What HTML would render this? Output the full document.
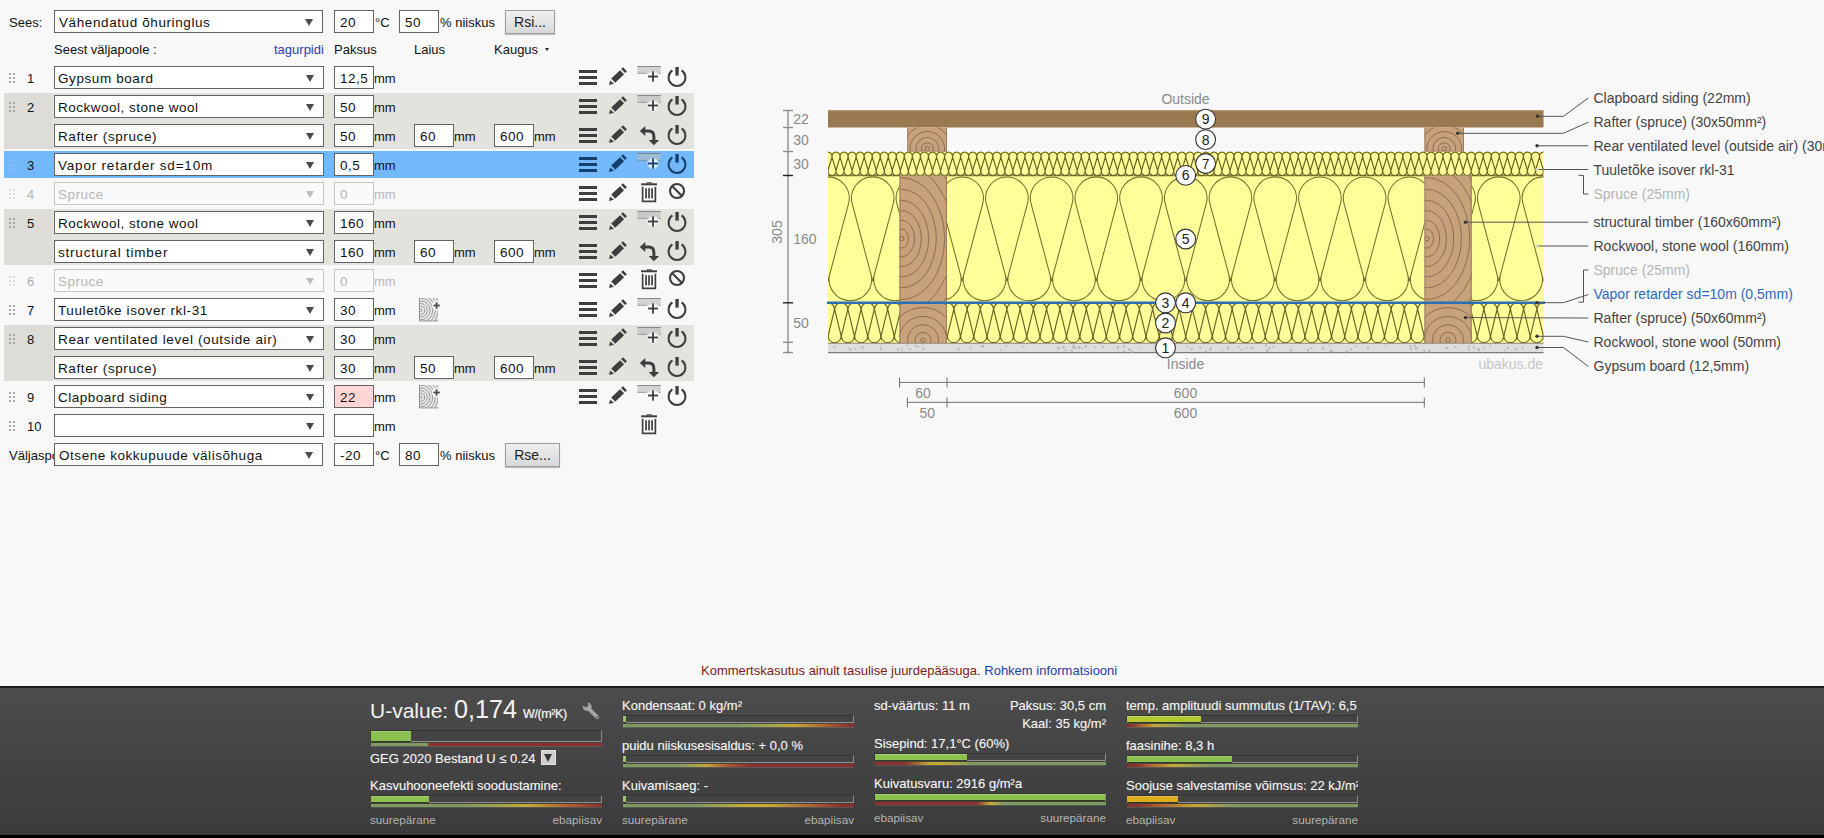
<!DOCTYPE html><html><head><meta charset="utf-8"><title>U-value</title><style>
*{box-sizing:border-box;margin:0;padding:0}
html,body{width:1824px;height:838px;overflow:hidden}
body{background:#f8f8f8;font-family:"Liberation Sans",sans-serif;font-size:13px;color:#111;position:relative}
.a{position:absolute;white-space:nowrap}
.t{position:absolute;white-space:nowrap;line-height:16px;height:16px;font-size:13px;color:#111}
.sel{position:absolute;height:23px;border:1px solid #636363;background:#fff;font-size:13.5px;letter-spacing:.5px;line-height:23px;padding-left:3px;color:#111;white-space:nowrap;overflow:hidden}
.sel:after{content:"";position:absolute;right:9px;top:8px;border-left:4px solid transparent;border-right:4px solid transparent;border-top:7px solid #4a4a4a}
.inp{position:absolute;height:23px;width:40px;border:1px solid #636363;background:#fff;font-size:13.5px;letter-spacing:.5px;line-height:23px;padding-left:5px;color:#111;white-space:nowrap;overflow:hidden}
.dis{border-color:#c6c6c6;background:#fafafa;color:#b6b6b6}
.dis:after{border-top-color:#bdbdbd}
.band{position:absolute;left:4px;width:690px}
.num{position:absolute;font-size:14px;line-height:16px;color:#111}
.btn{position:absolute;height:24px;border:1px solid #9c9c9c;background:linear-gradient(#efefef,#d8d8d8);box-shadow:0 1px 1px rgba(0,0,0,.22);font-size:14px;line-height:22px;text-align:center;color:#222}
svg{position:absolute;overflow:visible}
#bot{position:absolute;left:0;top:686px;width:1824px;height:152px;background:linear-gradient(#4c4c4c,#3b3b3b);border-top:2px solid #1c1c1c;border-bottom:3px solid #000;color:#f2f2f2}
#bot .l{position:absolute;white-space:nowrap;font-size:13px;line-height:16px;height:16px;color:#f4f4f4;text-shadow:0 0 1px rgba(255,255,255,.35)}
#bot .g{position:absolute;white-space:nowrap;font-size:11.7px;line-height:14px;color:#b4b4b4}
.bar{position:absolute;width:232px;height:8px;border-top:1px solid #343434;border-left:1px solid #3a3a3a;border-right:1px solid #8a8a8a;border-bottom:1px solid #8f8f8f;background:#444}
.bar i{position:absolute;left:0;top:0;bottom:0;display:block}
.strip{position:absolute;width:232px;height:3px;box-shadow:0 1px 0 rgba(255,255,255,.12)}
</style></head><body>
<svg width="0" height="0" style="left:0;top:0"><defs><radialGradient id="halo"><stop offset="0" stop-color="#fff" stop-opacity=".85"/><stop offset=".7" stop-color="#fff" stop-opacity=".7"/><stop offset="1" stop-color="#fff" stop-opacity="0"/></radialGradient></defs></svg>
<div class="band" style="top:93px;height:56px;background:#e3e2dd"></div><div class="band" style="top:93px;height:56px;width:48px;background:#dddcd7"></div>
<div class="band" style="top:151px;height:27px;background:#72b8fb"></div>
<div class="band" style="top:209px;height:56px;background:#e3e2dd"></div><div class="band" style="top:209px;height:56px;width:48px;background:#dddcd7"></div>
<div class="band" style="top:325px;height:56px;background:#e3e2dd"></div><div class="band" style="top:325px;height:56px;width:48px;background:#dddcd7"></div>
<div class="t" style="left:9px;top:14.6px;">Sees:</div>
<div class="sel" style="left:54px;top:10px;width:269px;padding-left:4px;letter-spacing:.6px">Vähendatud õhuringlus</div>
<div class="inp" style="left:334px;top:10px">20</div>
<div class="t" style="left:375px;top:14.6px;">°C</div>
<div class="inp" style="left:399px;top:10px">50</div>
<div class="t" style="left:440px;top:14.6px;">% niiskus</div>
<div class="btn" style="left:505px;top:10px;width:50px">Rsi...</div>
<div class="t" style="left:54px;top:41.6px;">Seest väljapoole :</div>
<div class="t" style="left:274px;top:41.6px;color:#2a3db0">tagurpidi</div>
<div class="t" style="left:334px;top:41.6px;">Paksus</div>
<div class="t" style="left:414px;top:41.6px;">Laius</div>
<div class="t" style="left:494px;top:41.6px;">Kaugus</div>
<div class="a" style="left:545px;top:48px;border-left:2.5px solid transparent;border-right:2.5px solid transparent;border-top:3.5px solid #222"></div>
<div class="t" style="left:27px;top:70.7px;color:#111">1</div>
<div class="sel" style="left:54px;top:66px;width:270px;letter-spacing:0.59px">Gypsum board</div>
<div class="inp" style="left:334px;top:66px;">12,5</div>
<div class="t" style="left:374px;top:70.7px;">mm</div>
<svg style="left:570px;top:66px" width="130" height="24" viewBox="570 0 130 24"><rect x="579" y="4" width="18" height="3" fill="#3e3e3e"/><rect x="579" y="10" width="18" height="3" fill="#3e3e3e"/><rect x="579" y="16" width="18" height="3" fill="#3e3e3e"/><g transform="translate(609,1)" fill="#3e3e3e"><path d="M0 17.9 L1.1 13.4 L5 16.8 Z"/><path d="M2.2 11.5 L6.2 15.8 L15.1 7.3 L11 3.2 Z"/><path d="M12.1 2.1 L14 0.2 L17.9 4.3 L16.1 6.1 Z"/></g><rect x="637.3" y="0" width="23.4" height="7.7" fill="rgba(186,186,186,.6)"/><rect x="637.3" y="0" width="23.4" height="1" fill="rgba(90,90,90,.6)"/><rect x="637.3" y="6.9" width="9.5" height="0.9" fill="rgba(110,110,110,.6)"/><rect x="659" y="6.9" width="1.7" height="0.9" fill="rgba(110,110,110,.6)"/><circle cx="653" cy="10.5" r="6.2" fill="url(#halo)"/><rect x="648" y="9.6" width="10" height="1.8" fill="#3e3e3e"/><rect x="652.1" y="5.3" width="1.8" height="10.4" fill="#3e3e3e"/><path d="M672.43 4.46 A8.4 8.4 0 1 0 681.57 4.46" fill="none" stroke="#3e3e3e" stroke-width="2"/><rect x="675.4" y="1" width="3.3" height="8.6" fill="#3e3e3e"/></svg>
<div class="t" style="left:27px;top:99.7px;color:#111">2</div>
<div class="sel" style="left:54px;top:95px;width:270px">Rockwool, stone wool</div>
<div class="inp" style="left:334px;top:95px;">50</div>
<div class="t" style="left:374px;top:99.7px;">mm</div>
<svg style="left:570px;top:95px" width="130" height="24" viewBox="570 0 130 24"><rect x="579" y="4" width="18" height="3" fill="#3e3e3e"/><rect x="579" y="10" width="18" height="3" fill="#3e3e3e"/><rect x="579" y="16" width="18" height="3" fill="#3e3e3e"/><g transform="translate(609,1)" fill="#3e3e3e"><path d="M0 17.9 L1.1 13.4 L5 16.8 Z"/><path d="M2.2 11.5 L6.2 15.8 L15.1 7.3 L11 3.2 Z"/><path d="M12.1 2.1 L14 0.2 L17.9 4.3 L16.1 6.1 Z"/></g><rect x="637.3" y="0" width="23.4" height="7.7" fill="rgba(186,186,186,.6)"/><rect x="637.3" y="0" width="23.4" height="1" fill="rgba(90,90,90,.6)"/><rect x="637.3" y="6.9" width="9.5" height="0.9" fill="rgba(110,110,110,.6)"/><rect x="659" y="6.9" width="1.7" height="0.9" fill="rgba(110,110,110,.6)"/><circle cx="653" cy="10.5" r="6.2" fill="url(#halo)"/><rect x="648" y="9.6" width="10" height="1.8" fill="#3e3e3e"/><rect x="652.1" y="5.3" width="1.8" height="10.4" fill="#3e3e3e"/><path d="M672.43 4.46 A8.4 8.4 0 1 0 681.57 4.46" fill="none" stroke="#3e3e3e" stroke-width="2"/><rect x="675.4" y="1" width="3.3" height="8.6" fill="#3e3e3e"/></svg>
<div class="sel" style="left:54px;top:124px;width:270px;letter-spacing:0.61px">Rafter (spruce)</div>
<div class="inp" style="left:334px;top:124px;">50</div>
<div class="t" style="left:374px;top:128.7px;">mm</div>
<div class="inp" style="left:414px;top:124px">60</div>
<div class="t" style="left:454px;top:128.7px;">mm</div>
<div class="inp" style="left:494px;top:124px">600</div>
<div class="t" style="left:534px;top:128.7px;">mm</div>
<svg style="left:570px;top:124px" width="130" height="24" viewBox="570 0 130 24"><rect x="579" y="4" width="18" height="3" fill="#3e3e3e"/><rect x="579" y="10" width="18" height="3" fill="#3e3e3e"/><rect x="579" y="16" width="18" height="3" fill="#3e3e3e"/><g transform="translate(609,1)" fill="#3e3e3e"><path d="M0 17.9 L1.1 13.4 L5 16.8 Z"/><path d="M2.2 11.5 L6.2 15.8 L15.1 7.3 L11 3.2 Z"/><path d="M12.1 2.1 L14 0.2 L17.9 4.3 L16.1 6.1 Z"/></g><g transform="translate(640,0)"><path d="M-0.2 7 L5.3 1.9 L5.3 12.1 Z" fill="#3e3e3e"/><path d="M5 7 L8.6 7 Q13.9 7 13.9 12.6 L13.9 16.6" fill="none" stroke="#3e3e3e" stroke-width="3"/><path d="M13.9 21.2 L8.6 16 L19.2 16 Z" fill="#3e3e3e"/></g><path d="M672.43 4.46 A8.4 8.4 0 1 0 681.57 4.46" fill="none" stroke="#3e3e3e" stroke-width="2"/><rect x="675.4" y="1" width="3.3" height="8.6" fill="#3e3e3e"/></svg>
<div class="t" style="left:27px;top:157.7px;color:#111">3</div>
<div class="sel" style="left:54px;top:153px;width:270px;letter-spacing:0.8px">Vapor retarder sd=10m</div>
<div class="inp" style="left:334px;top:153px;">0,5</div>
<div class="t" style="left:374px;top:157.7px;">mm</div>
<svg style="left:570px;top:153px" width="130" height="24" viewBox="570 0 130 24"><rect x="579" y="4" width="18" height="3" fill="#123f6d"/><rect x="579" y="10" width="18" height="3" fill="#123f6d"/><rect x="579" y="16" width="18" height="3" fill="#123f6d"/><g transform="translate(609,1)" fill="#123f6d"><path d="M0 17.9 L1.1 13.4 L5 16.8 Z"/><path d="M2.2 11.5 L6.2 15.8 L15.1 7.3 L11 3.2 Z"/><path d="M12.1 2.1 L14 0.2 L17.9 4.3 L16.1 6.1 Z"/></g><rect x="637.3" y="0" width="23.4" height="7.7" fill="rgba(186,186,186,.6)"/><rect x="637.3" y="0" width="23.4" height="1" fill="rgba(90,90,90,.6)"/><rect x="637.3" y="6.9" width="9.5" height="0.9" fill="rgba(110,110,110,.6)"/><rect x="659" y="6.9" width="1.7" height="0.9" fill="rgba(110,110,110,.6)"/><circle cx="653" cy="10.5" r="6.2" fill="url(#halo)"/><rect x="648" y="9.6" width="10" height="1.8" fill="#123f6d"/><rect x="652.1" y="5.3" width="1.8" height="10.4" fill="#123f6d"/><path d="M672.43 4.46 A8.4 8.4 0 1 0 681.57 4.46" fill="none" stroke="#123f6d" stroke-width="2"/><rect x="675.4" y="1" width="3.3" height="8.6" fill="#123f6d"/></svg>
<div class="t" style="left:27px;top:186.7px;color:#b0b0b0">4</div>
<div class="sel dis" style="left:54px;top:182px;width:270px">Spruce</div>
<div class="inp dis" style="left:334px;top:182px;">0</div>
<div class="t" style="left:374px;top:186.7px;color:#b8b8b8;">mm</div>
<svg style="left:570px;top:182px" width="130" height="24" viewBox="570 0 130 24"><rect x="579" y="4" width="18" height="3" fill="#3e3e3e"/><rect x="579" y="10" width="18" height="3" fill="#3e3e3e"/><rect x="579" y="16" width="18" height="3" fill="#3e3e3e"/><g transform="translate(609,1)" fill="#3e3e3e"><path d="M0 17.9 L1.1 13.4 L5 16.8 Z"/><path d="M2.2 11.5 L6.2 15.8 L15.1 7.3 L11 3.2 Z"/><path d="M12.1 2.1 L14 0.2 L17.9 4.3 L16.1 6.1 Z"/></g><rect x="640" y="-1" width="18" height="22" fill="#fff" opacity=".8"/><rect x="641" y="1.3" width="16" height="2" fill="#3e3e3e"/><rect x="646.5" y="0.2" width="5.4" height="1.4" rx=".6" fill="#3e3e3e"/><path d="M642.6 4.8 L642.6 19.3 L655.4 19.3 L655.4 4.8" fill="none" stroke="#3e3e3e" stroke-width="1.7"/><rect x="645.2" y="6.2" width="1.7" height="10.2" fill="#3e3e3e"/><rect x="648.2" y="6.2" width="1.7" height="10.2" fill="#3e3e3e"/><rect x="651.2" y="6.2" width="1.7" height="10.2" fill="#3e3e3e"/><circle cx="677" cy="9" r="7" fill="none" stroke="#3e3e3e" stroke-width="2.1"/><path d="M672 4 L682 14" stroke="#3e3e3e" stroke-width="2.1"/></svg>
<div class="t" style="left:27px;top:215.7px;color:#111">5</div>
<div class="sel" style="left:54px;top:211px;width:270px">Rockwool, stone wool</div>
<div class="inp" style="left:334px;top:211px;">160</div>
<div class="t" style="left:374px;top:215.7px;">mm</div>
<svg style="left:570px;top:211px" width="130" height="24" viewBox="570 0 130 24"><rect x="579" y="4" width="18" height="3" fill="#3e3e3e"/><rect x="579" y="10" width="18" height="3" fill="#3e3e3e"/><rect x="579" y="16" width="18" height="3" fill="#3e3e3e"/><g transform="translate(609,1)" fill="#3e3e3e"><path d="M0 17.9 L1.1 13.4 L5 16.8 Z"/><path d="M2.2 11.5 L6.2 15.8 L15.1 7.3 L11 3.2 Z"/><path d="M12.1 2.1 L14 0.2 L17.9 4.3 L16.1 6.1 Z"/></g><rect x="637.3" y="0" width="23.4" height="7.7" fill="rgba(186,186,186,.6)"/><rect x="637.3" y="0" width="23.4" height="1" fill="rgba(90,90,90,.6)"/><rect x="637.3" y="6.9" width="9.5" height="0.9" fill="rgba(110,110,110,.6)"/><rect x="659" y="6.9" width="1.7" height="0.9" fill="rgba(110,110,110,.6)"/><circle cx="653" cy="10.5" r="6.2" fill="url(#halo)"/><rect x="648" y="9.6" width="10" height="1.8" fill="#3e3e3e"/><rect x="652.1" y="5.3" width="1.8" height="10.4" fill="#3e3e3e"/><path d="M672.43 4.46 A8.4 8.4 0 1 0 681.57 4.46" fill="none" stroke="#3e3e3e" stroke-width="2"/><rect x="675.4" y="1" width="3.3" height="8.6" fill="#3e3e3e"/></svg>
<div class="sel" style="left:54px;top:240px;width:270px;letter-spacing:0.79px">structural timber</div>
<div class="inp" style="left:334px;top:240px;">160</div>
<div class="t" style="left:374px;top:244.7px;">mm</div>
<div class="inp" style="left:414px;top:240px">60</div>
<div class="t" style="left:454px;top:244.7px;">mm</div>
<div class="inp" style="left:494px;top:240px">600</div>
<div class="t" style="left:534px;top:244.7px;">mm</div>
<svg style="left:570px;top:240px" width="130" height="24" viewBox="570 0 130 24"><rect x="579" y="4" width="18" height="3" fill="#3e3e3e"/><rect x="579" y="10" width="18" height="3" fill="#3e3e3e"/><rect x="579" y="16" width="18" height="3" fill="#3e3e3e"/><g transform="translate(609,1)" fill="#3e3e3e"><path d="M0 17.9 L1.1 13.4 L5 16.8 Z"/><path d="M2.2 11.5 L6.2 15.8 L15.1 7.3 L11 3.2 Z"/><path d="M12.1 2.1 L14 0.2 L17.9 4.3 L16.1 6.1 Z"/></g><g transform="translate(640,0)"><path d="M-0.2 7 L5.3 1.9 L5.3 12.1 Z" fill="#3e3e3e"/><path d="M5 7 L8.6 7 Q13.9 7 13.9 12.6 L13.9 16.6" fill="none" stroke="#3e3e3e" stroke-width="3"/><path d="M13.9 21.2 L8.6 16 L19.2 16 Z" fill="#3e3e3e"/></g><path d="M672.43 4.46 A8.4 8.4 0 1 0 681.57 4.46" fill="none" stroke="#3e3e3e" stroke-width="2"/><rect x="675.4" y="1" width="3.3" height="8.6" fill="#3e3e3e"/></svg>
<div class="t" style="left:27px;top:273.7px;color:#b0b0b0">6</div>
<div class="sel dis" style="left:54px;top:269px;width:270px">Spruce</div>
<div class="inp dis" style="left:334px;top:269px;">0</div>
<div class="t" style="left:374px;top:273.7px;color:#b8b8b8;">mm</div>
<svg style="left:570px;top:269px" width="130" height="24" viewBox="570 0 130 24"><rect x="579" y="4" width="18" height="3" fill="#3e3e3e"/><rect x="579" y="10" width="18" height="3" fill="#3e3e3e"/><rect x="579" y="16" width="18" height="3" fill="#3e3e3e"/><g transform="translate(609,1)" fill="#3e3e3e"><path d="M0 17.9 L1.1 13.4 L5 16.8 Z"/><path d="M2.2 11.5 L6.2 15.8 L15.1 7.3 L11 3.2 Z"/><path d="M12.1 2.1 L14 0.2 L17.9 4.3 L16.1 6.1 Z"/></g><rect x="640" y="-1" width="18" height="22" fill="#fff" opacity=".8"/><rect x="641" y="1.3" width="16" height="2" fill="#3e3e3e"/><rect x="646.5" y="0.2" width="5.4" height="1.4" rx=".6" fill="#3e3e3e"/><path d="M642.6 4.8 L642.6 19.3 L655.4 19.3 L655.4 4.8" fill="none" stroke="#3e3e3e" stroke-width="1.7"/><rect x="645.2" y="6.2" width="1.7" height="10.2" fill="#3e3e3e"/><rect x="648.2" y="6.2" width="1.7" height="10.2" fill="#3e3e3e"/><rect x="651.2" y="6.2" width="1.7" height="10.2" fill="#3e3e3e"/><circle cx="677" cy="9" r="7" fill="none" stroke="#3e3e3e" stroke-width="2.1"/><path d="M672 4 L682 14" stroke="#3e3e3e" stroke-width="2.1"/></svg>
<div class="t" style="left:27px;top:302.7px;color:#111">7</div>
<div class="sel" style="left:54px;top:298px;width:270px;letter-spacing:0.6px">Tuuletõke isover rkl-31</div>
<div class="inp" style="left:334px;top:298px;">30</div>
<div class="t" style="left:374px;top:302.7px;">mm</div>
<svg style="left:419px;top:298px" width="24" height="24" viewBox="0 0 24 24"><defs><clipPath id="tc298"><rect x="0" y="0" width="19" height="23.5"/></clipPath></defs><g clip-path="url(#tc298)"><rect x="0" y="0" width="19" height="23.5" fill="#e9e9e9"/><circle cx="1.5" cy="12.3" r="1.4" fill="none" stroke="#8e8e8e" stroke-width="0.9"/><circle cx="1.5" cy="12.3" r="4.1" fill="none" stroke="#8e8e8e" stroke-width="0.9"/><circle cx="1.5" cy="12.3" r="6.8" fill="none" stroke="#8e8e8e" stroke-width="0.9"/><circle cx="1.5" cy="12.3" r="9.5" fill="none" stroke="#8e8e8e" stroke-width="0.9"/><circle cx="1.5" cy="12.3" r="12.2" fill="none" stroke="#8e8e8e" stroke-width="0.9"/><circle cx="1.5" cy="12.3" r="14.9" fill="none" stroke="#8e8e8e" stroke-width="0.9"/><circle cx="1.5" cy="12.3" r="17.6" fill="none" stroke="#8e8e8e" stroke-width="0.9"/><circle cx="1.5" cy="12.3" r="20.3" fill="none" stroke="#8e8e8e" stroke-width="0.9"/><circle cx="1.5" cy="12.3" r="23" fill="none" stroke="#8e8e8e" stroke-width="0.9"/><path d="M0.5 0 V23 H19" fill="none" stroke="#909090" stroke-width="1"/></g><circle cx="17.5" cy="7.5" r="4.6" fill="#f8f8f8"/><rect x="14.4" y="6.6" width="6.4" height="1.8" fill="#4a4a4a"/><rect x="16.7" y="4.3" width="1.8" height="6.4" fill="#4a4a4a"/></svg>
<svg style="left:570px;top:298px" width="130" height="24" viewBox="570 0 130 24"><rect x="579" y="4" width="18" height="3" fill="#3e3e3e"/><rect x="579" y="10" width="18" height="3" fill="#3e3e3e"/><rect x="579" y="16" width="18" height="3" fill="#3e3e3e"/><g transform="translate(609,1)" fill="#3e3e3e"><path d="M0 17.9 L1.1 13.4 L5 16.8 Z"/><path d="M2.2 11.5 L6.2 15.8 L15.1 7.3 L11 3.2 Z"/><path d="M12.1 2.1 L14 0.2 L17.9 4.3 L16.1 6.1 Z"/></g><rect x="637.3" y="0" width="23.4" height="7.7" fill="rgba(186,186,186,.6)"/><rect x="637.3" y="0" width="23.4" height="1" fill="rgba(90,90,90,.6)"/><rect x="637.3" y="6.9" width="9.5" height="0.9" fill="rgba(110,110,110,.6)"/><rect x="659" y="6.9" width="1.7" height="0.9" fill="rgba(110,110,110,.6)"/><circle cx="653" cy="10.5" r="6.2" fill="url(#halo)"/><rect x="648" y="9.6" width="10" height="1.8" fill="#3e3e3e"/><rect x="652.1" y="5.3" width="1.8" height="10.4" fill="#3e3e3e"/><path d="M672.43 4.46 A8.4 8.4 0 1 0 681.57 4.46" fill="none" stroke="#3e3e3e" stroke-width="2"/><rect x="675.4" y="1" width="3.3" height="8.6" fill="#3e3e3e"/></svg>
<div class="t" style="left:27px;top:331.7px;color:#111">8</div>
<div class="sel" style="left:54px;top:327px;width:270px;letter-spacing:0.63px">Rear ventilated level (outside air)</div>
<div class="inp" style="left:334px;top:327px;">30</div>
<div class="t" style="left:374px;top:331.7px;">mm</div>
<svg style="left:570px;top:327px" width="130" height="24" viewBox="570 0 130 24"><rect x="579" y="4" width="18" height="3" fill="#3e3e3e"/><rect x="579" y="10" width="18" height="3" fill="#3e3e3e"/><rect x="579" y="16" width="18" height="3" fill="#3e3e3e"/><g transform="translate(609,1)" fill="#3e3e3e"><path d="M0 17.9 L1.1 13.4 L5 16.8 Z"/><path d="M2.2 11.5 L6.2 15.8 L15.1 7.3 L11 3.2 Z"/><path d="M12.1 2.1 L14 0.2 L17.9 4.3 L16.1 6.1 Z"/></g><rect x="637.3" y="0" width="23.4" height="7.7" fill="rgba(186,186,186,.6)"/><rect x="637.3" y="0" width="23.4" height="1" fill="rgba(90,90,90,.6)"/><rect x="637.3" y="6.9" width="9.5" height="0.9" fill="rgba(110,110,110,.6)"/><rect x="659" y="6.9" width="1.7" height="0.9" fill="rgba(110,110,110,.6)"/><circle cx="653" cy="10.5" r="6.2" fill="url(#halo)"/><rect x="648" y="9.6" width="10" height="1.8" fill="#3e3e3e"/><rect x="652.1" y="5.3" width="1.8" height="10.4" fill="#3e3e3e"/><path d="M672.43 4.46 A8.4 8.4 0 1 0 681.57 4.46" fill="none" stroke="#3e3e3e" stroke-width="2"/><rect x="675.4" y="1" width="3.3" height="8.6" fill="#3e3e3e"/></svg>
<div class="sel" style="left:54px;top:356px;width:270px;letter-spacing:0.61px">Rafter (spruce)</div>
<div class="inp" style="left:334px;top:356px;">30</div>
<div class="t" style="left:374px;top:360.7px;">mm</div>
<div class="inp" style="left:414px;top:356px">50</div>
<div class="t" style="left:454px;top:360.7px;">mm</div>
<div class="inp" style="left:494px;top:356px">600</div>
<div class="t" style="left:534px;top:360.7px;">mm</div>
<svg style="left:570px;top:356px" width="130" height="24" viewBox="570 0 130 24"><rect x="579" y="4" width="18" height="3" fill="#3e3e3e"/><rect x="579" y="10" width="18" height="3" fill="#3e3e3e"/><rect x="579" y="16" width="18" height="3" fill="#3e3e3e"/><g transform="translate(609,1)" fill="#3e3e3e"><path d="M0 17.9 L1.1 13.4 L5 16.8 Z"/><path d="M2.2 11.5 L6.2 15.8 L15.1 7.3 L11 3.2 Z"/><path d="M12.1 2.1 L14 0.2 L17.9 4.3 L16.1 6.1 Z"/></g><g transform="translate(640,0)"><path d="M-0.2 7 L5.3 1.9 L5.3 12.1 Z" fill="#3e3e3e"/><path d="M5 7 L8.6 7 Q13.9 7 13.9 12.6 L13.9 16.6" fill="none" stroke="#3e3e3e" stroke-width="3"/><path d="M13.9 21.2 L8.6 16 L19.2 16 Z" fill="#3e3e3e"/></g><path d="M672.43 4.46 A8.4 8.4 0 1 0 681.57 4.46" fill="none" stroke="#3e3e3e" stroke-width="2"/><rect x="675.4" y="1" width="3.3" height="8.6" fill="#3e3e3e"/></svg>
<div class="t" style="left:27px;top:389.7px;color:#111">9</div>
<div class="sel" style="left:54px;top:385px;width:270px">Clapboard siding</div>
<div class="inp" style="left:334px;top:385px;background:#ffd6d6;">22</div>
<div class="t" style="left:374px;top:389.7px;">mm</div>
<svg style="left:419px;top:385px" width="24" height="24" viewBox="0 0 24 24"><defs><clipPath id="tc385"><rect x="0" y="0" width="19" height="23.5"/></clipPath></defs><g clip-path="url(#tc385)"><rect x="0" y="0" width="19" height="23.5" fill="#e9e9e9"/><circle cx="1.5" cy="12.3" r="1.4" fill="none" stroke="#8e8e8e" stroke-width="0.9"/><circle cx="1.5" cy="12.3" r="4.1" fill="none" stroke="#8e8e8e" stroke-width="0.9"/><circle cx="1.5" cy="12.3" r="6.8" fill="none" stroke="#8e8e8e" stroke-width="0.9"/><circle cx="1.5" cy="12.3" r="9.5" fill="none" stroke="#8e8e8e" stroke-width="0.9"/><circle cx="1.5" cy="12.3" r="12.2" fill="none" stroke="#8e8e8e" stroke-width="0.9"/><circle cx="1.5" cy="12.3" r="14.9" fill="none" stroke="#8e8e8e" stroke-width="0.9"/><circle cx="1.5" cy="12.3" r="17.6" fill="none" stroke="#8e8e8e" stroke-width="0.9"/><circle cx="1.5" cy="12.3" r="20.3" fill="none" stroke="#8e8e8e" stroke-width="0.9"/><circle cx="1.5" cy="12.3" r="23" fill="none" stroke="#8e8e8e" stroke-width="0.9"/><path d="M0.5 0 V23 H19" fill="none" stroke="#909090" stroke-width="1"/></g><circle cx="17.5" cy="7.5" r="4.6" fill="#f8f8f8"/><rect x="14.4" y="6.6" width="6.4" height="1.8" fill="#4a4a4a"/><rect x="16.7" y="4.3" width="1.8" height="6.4" fill="#4a4a4a"/></svg>
<svg style="left:570px;top:385px" width="130" height="24" viewBox="570 0 130 24"><rect x="579" y="4" width="18" height="3" fill="#3e3e3e"/><rect x="579" y="10" width="18" height="3" fill="#3e3e3e"/><rect x="579" y="16" width="18" height="3" fill="#3e3e3e"/><g transform="translate(609,1)" fill="#3e3e3e"><path d="M0 17.9 L1.1 13.4 L5 16.8 Z"/><path d="M2.2 11.5 L6.2 15.8 L15.1 7.3 L11 3.2 Z"/><path d="M12.1 2.1 L14 0.2 L17.9 4.3 L16.1 6.1 Z"/></g><rect x="637.3" y="0" width="23.4" height="7.7" fill="rgba(186,186,186,.6)"/><rect x="637.3" y="0" width="23.4" height="1" fill="rgba(90,90,90,.6)"/><rect x="637.3" y="6.9" width="9.5" height="0.9" fill="rgba(110,110,110,.6)"/><rect x="659" y="6.9" width="1.7" height="0.9" fill="rgba(110,110,110,.6)"/><circle cx="653" cy="10.5" r="6.2" fill="url(#halo)"/><rect x="648" y="9.6" width="10" height="1.8" fill="#3e3e3e"/><rect x="652.1" y="5.3" width="1.8" height="10.4" fill="#3e3e3e"/><path d="M672.43 4.46 A8.4 8.4 0 1 0 681.57 4.46" fill="none" stroke="#3e3e3e" stroke-width="2"/><rect x="675.4" y="1" width="3.3" height="8.6" fill="#3e3e3e"/></svg>
<div class="t" style="left:27px;top:418.7px;color:#111">10</div>
<div class="sel" style="left:54px;top:414px;width:270px"></div>
<div class="inp" style="left:334px;top:414px;"></div>
<div class="t" style="left:374px;top:418.7px;">mm</div>
<svg style="left:570px;top:414px" width="130" height="24" viewBox="570 0 130 24"><rect x="640" y="-1" width="18" height="22" fill="#fff" opacity=".8"/><rect x="641" y="1.3" width="16" height="2" fill="#3e3e3e"/><rect x="646.5" y="0.2" width="5.4" height="1.4" rx=".6" fill="#3e3e3e"/><path d="M642.6 4.8 L642.6 19.3 L655.4 19.3 L655.4 4.8" fill="none" stroke="#3e3e3e" stroke-width="1.7"/><rect x="645.2" y="6.2" width="1.7" height="10.2" fill="#3e3e3e"/><rect x="648.2" y="6.2" width="1.7" height="10.2" fill="#3e3e3e"/><rect x="651.2" y="6.2" width="1.7" height="10.2" fill="#3e3e3e"/></svg>
<svg style="left:0;top:0" width="20" height="440" viewBox="0 0 20 440"><rect x="9" y="73" width="2" height="2" fill="#a9a9a9"/><rect x="9" y="77" width="2" height="2" fill="#a9a9a9"/><rect x="9" y="81" width="2" height="2" fill="#a9a9a9"/><rect x="13" y="73" width="2" height="2" fill="#a9a9a9"/><rect x="13" y="77" width="2" height="2" fill="#a9a9a9"/><rect x="13" y="81" width="2" height="2" fill="#a9a9a9"/><rect x="9" y="102" width="2" height="2" fill="#a9a9a9"/><rect x="9" y="106" width="2" height="2" fill="#a9a9a9"/><rect x="9" y="110" width="2" height="2" fill="#a9a9a9"/><rect x="13" y="102" width="2" height="2" fill="#a9a9a9"/><rect x="13" y="106" width="2" height="2" fill="#a9a9a9"/><rect x="13" y="110" width="2" height="2" fill="#a9a9a9"/><rect x="9" y="160" width="2" height="2" fill="#86bdf3"/><rect x="9" y="164" width="2" height="2" fill="#86bdf3"/><rect x="9" y="168" width="2" height="2" fill="#86bdf3"/><rect x="13" y="160" width="2" height="2" fill="#86bdf3"/><rect x="13" y="164" width="2" height="2" fill="#86bdf3"/><rect x="13" y="168" width="2" height="2" fill="#86bdf3"/><rect x="9" y="189" width="2" height="2" fill="#dcdcdc"/><rect x="9" y="193" width="2" height="2" fill="#dcdcdc"/><rect x="9" y="197" width="2" height="2" fill="#dcdcdc"/><rect x="13" y="189" width="2" height="2" fill="#dcdcdc"/><rect x="13" y="193" width="2" height="2" fill="#dcdcdc"/><rect x="13" y="197" width="2" height="2" fill="#dcdcdc"/><rect x="9" y="218" width="2" height="2" fill="#a9a9a9"/><rect x="9" y="222" width="2" height="2" fill="#a9a9a9"/><rect x="9" y="226" width="2" height="2" fill="#a9a9a9"/><rect x="13" y="218" width="2" height="2" fill="#a9a9a9"/><rect x="13" y="222" width="2" height="2" fill="#a9a9a9"/><rect x="13" y="226" width="2" height="2" fill="#a9a9a9"/><rect x="9" y="276" width="2" height="2" fill="#dcdcdc"/><rect x="9" y="280" width="2" height="2" fill="#dcdcdc"/><rect x="9" y="284" width="2" height="2" fill="#dcdcdc"/><rect x="13" y="276" width="2" height="2" fill="#dcdcdc"/><rect x="13" y="280" width="2" height="2" fill="#dcdcdc"/><rect x="13" y="284" width="2" height="2" fill="#dcdcdc"/><rect x="9" y="305" width="2" height="2" fill="#a9a9a9"/><rect x="9" y="309" width="2" height="2" fill="#a9a9a9"/><rect x="9" y="313" width="2" height="2" fill="#a9a9a9"/><rect x="13" y="305" width="2" height="2" fill="#a9a9a9"/><rect x="13" y="309" width="2" height="2" fill="#a9a9a9"/><rect x="13" y="313" width="2" height="2" fill="#a9a9a9"/><rect x="9" y="334" width="2" height="2" fill="#a9a9a9"/><rect x="9" y="338" width="2" height="2" fill="#a9a9a9"/><rect x="9" y="342" width="2" height="2" fill="#a9a9a9"/><rect x="13" y="334" width="2" height="2" fill="#a9a9a9"/><rect x="13" y="338" width="2" height="2" fill="#a9a9a9"/><rect x="13" y="342" width="2" height="2" fill="#a9a9a9"/><rect x="9" y="392" width="2" height="2" fill="#a9a9a9"/><rect x="9" y="396" width="2" height="2" fill="#a9a9a9"/><rect x="9" y="400" width="2" height="2" fill="#a9a9a9"/><rect x="13" y="392" width="2" height="2" fill="#a9a9a9"/><rect x="13" y="396" width="2" height="2" fill="#a9a9a9"/><rect x="13" y="400" width="2" height="2" fill="#a9a9a9"/><rect x="9" y="421" width="2" height="2" fill="#a9a9a9"/><rect x="9" y="425" width="2" height="2" fill="#a9a9a9"/><rect x="9" y="429" width="2" height="2" fill="#a9a9a9"/><rect x="13" y="421" width="2" height="2" fill="#a9a9a9"/><rect x="13" y="425" width="2" height="2" fill="#a9a9a9"/><rect x="13" y="429" width="2" height="2" fill="#a9a9a9"/></svg>
<div class="t" style="left:9px;top:447.7px;width:45px;overflow:hidden">Väljaspool:</div>
<div class="sel" style="left:54px;top:443px;width:269px;padding-left:4px;letter-spacing:.55px">Otsene kokkupuude välisõhuga</div>
<div class="inp" style="left:334px;top:443px">-20</div>
<div class="t" style="left:375px;top:447.7px;">°C</div>
<div class="inp" style="left:399px;top:443px">80</div>
<div class="t" style="left:440px;top:447.7px;">% niiskus</div>
<div class="btn" style="left:505px;top:443px;width:55px">Rse...</div>
<svg style="left:760px;top:80px" width="1064" height="360" viewBox="760 80 1064 360" font-family="Liberation Sans, sans-serif"><defs><clipPath id="cl7"><rect x="828" y="150" width="715.5" height="27"/></clipPath><clipPath id="cl5"><rect x="828" y="175.5" width="715.5" height="128"/></clipPath><clipPath id="cl2"><rect x="828" y="303" width="715.5" height="41"/></clipPath><clipPath id="cta"><rect x="899.5" y="175.5" width="47.5" height="127.80000000000001"/></clipPath><clipPath id="ctb"><rect x="1424.5" y="175.5" width="47.200000000000045" height="127.80000000000001"/></clipPath><clipPath id="ctc"><rect x="899.5" y="303.3" width="47.5" height="39.89999999999998"/></clipPath><clipPath id="ctd"><rect x="1424.5" y="303.3" width="47.200000000000045" height="39.89999999999998"/></clipPath><clipPath id="cte"><rect x="907.3" y="127.5" width="39.700000000000045" height="24.0"/></clipPath><clipPath id="ctf"><rect x="1424.5" y="127.5" width="39.5" height="24.0"/></clipPath></defs><path d="M788 110.5 V353.5" stroke="#8f8f8f" stroke-width="1.4" fill="none"/><path d="M783 110.5 H793" stroke="#8f8f8f" stroke-width="1.4"/><path d="M783 127.5 H793" stroke="#8f8f8f" stroke-width="1.4"/><path d="M783 151.5 H793" stroke="#8f8f8f" stroke-width="1.4"/><path d="M783 175.5 H793" stroke="#222" stroke-width="1.4"/><path d="M783 302.8 H793" stroke="#222" stroke-width="1.4"/><path d="M783 342.3 H793" stroke="#8f8f8f" stroke-width="1.4"/><path d="M783 352.5 H793" stroke="#8f8f8f" stroke-width="1.4"/><text x="793.3" y="124" font-size="14" fill="#8a8a8a" text-anchor="start" >22</text><text x="793.3" y="144.5" font-size="14" fill="#8a8a8a" text-anchor="start" >30</text><text x="793.3" y="168.5" font-size="14" fill="#8a8a8a" text-anchor="start" >30</text><text x="793.3" y="244.3" font-size="14" fill="#8a8a8a" text-anchor="start" >160</text><text x="793.3" y="328" font-size="14" fill="#8a8a8a" text-anchor="start" >50</text><text transform="translate(781.5,232) rotate(-90)" font-size="14" fill="#8a8a8a" text-anchor="middle">305</text><rect x="828" y="110.5" width="715.5" height="17" fill="#997a50"/><rect x="828" y="110.2" width="715.5" height="1.2" fill="#a98c63"/><rect x="828" y="152" width="715.5" height="191.5" fill="#ffff99"/><path d="M819.96 170.40L823.91 157.43A4.13 4.13 0 1 0 816.01 157.43ZM820.03 170.17A4.13 4.13 0 1 0 827.93 170.17M828.00 170.40L831.95 157.43A4.13 4.13 0 1 0 824.05 157.43ZM828.07 170.17A4.13 4.13 0 1 0 835.97 170.17M836.04 170.40L839.99 157.43A4.13 4.13 0 1 0 832.09 157.43ZM836.11 170.17A4.13 4.13 0 1 0 844.01 170.17M844.08 170.40L848.03 157.43A4.13 4.13 0 1 0 840.13 157.43ZM844.15 170.17A4.13 4.13 0 1 0 852.05 170.17M852.12 170.40L856.07 157.43A4.13 4.13 0 1 0 848.17 157.43ZM852.19 170.17A4.13 4.13 0 1 0 860.09 170.17M860.16 170.40L864.11 157.43A4.13 4.13 0 1 0 856.21 157.43ZM860.23 170.17A4.13 4.13 0 1 0 868.13 170.17M868.20 170.40L872.15 157.43A4.13 4.13 0 1 0 864.25 157.43ZM868.27 170.17A4.13 4.13 0 1 0 876.17 170.17M876.24 170.40L880.19 157.43A4.13 4.13 0 1 0 872.29 157.43ZM876.31 170.17A4.13 4.13 0 1 0 884.20 170.17M884.28 170.40L888.22 157.43A4.13 4.13 0 1 0 880.33 157.43ZM884.35 170.17A4.13 4.13 0 1 0 892.24 170.17M892.31 170.40L896.26 157.43A4.13 4.13 0 1 0 888.37 157.43ZM892.38 170.17A4.13 4.13 0 1 0 900.28 170.17M900.35 170.40L904.30 157.43A4.13 4.13 0 1 0 896.40 157.43ZM900.42 170.17A4.13 4.13 0 1 0 908.32 170.17M908.39 170.40L912.34 157.43A4.13 4.13 0 1 0 904.44 157.43ZM908.46 170.17A4.13 4.13 0 1 0 916.36 170.17M916.43 170.40L920.38 157.43A4.13 4.13 0 1 0 912.48 157.43ZM916.50 170.17A4.13 4.13 0 1 0 924.40 170.17M924.47 170.40L928.42 157.43A4.13 4.13 0 1 0 920.52 157.43ZM924.54 170.17A4.13 4.13 0 1 0 932.44 170.17M932.51 170.40L936.46 157.43A4.13 4.13 0 1 0 928.56 157.43ZM932.58 170.17A4.13 4.13 0 1 0 940.48 170.17M940.55 170.40L944.50 157.43A4.13 4.13 0 1 0 936.60 157.43ZM940.62 170.17A4.13 4.13 0 1 0 948.52 170.17M948.59 170.40L952.54 157.43A4.13 4.13 0 1 0 944.64 157.43ZM948.66 170.17A4.13 4.13 0 1 0 956.56 170.17M956.63 170.40L960.58 157.43A4.13 4.13 0 1 0 952.68 157.43ZM956.70 170.17A4.13 4.13 0 1 0 964.60 170.17M964.67 170.40L968.62 157.43A4.13 4.13 0 1 0 960.72 157.43ZM964.74 170.17A4.13 4.13 0 1 0 972.64 170.17M972.71 170.40L976.66 157.43A4.13 4.13 0 1 0 968.76 157.43ZM972.78 170.17A4.13 4.13 0 1 0 980.68 170.17M980.75 170.40L984.70 157.43A4.13 4.13 0 1 0 976.80 157.43ZM980.82 170.17A4.13 4.13 0 1 0 988.72 170.17M988.79 170.40L992.74 157.43A4.13 4.13 0 1 0 984.84 157.43ZM988.86 170.17A4.13 4.13 0 1 0 996.76 170.17M996.83 170.40L1000.78 157.43A4.13 4.13 0 1 0 992.88 157.43ZM996.90 170.17A4.13 4.13 0 1 0 1004.79 170.17M1004.87 170.40L1008.81 157.43A4.13 4.13 0 1 0 1000.92 157.43ZM1004.94 170.17A4.13 4.13 0 1 0 1012.83 170.17M1012.90 170.40L1016.85 157.43A4.13 4.13 0 1 0 1008.96 157.43ZM1012.97 170.17A4.13 4.13 0 1 0 1020.87 170.17M1020.94 170.40L1024.89 157.43A4.13 4.13 0 1 0 1016.99 157.43ZM1021.01 170.17A4.13 4.13 0 1 0 1028.91 170.17M1028.98 170.40L1032.93 157.43A4.13 4.13 0 1 0 1025.03 157.43ZM1029.05 170.17A4.13 4.13 0 1 0 1036.95 170.17M1037.02 170.40L1040.97 157.43A4.13 4.13 0 1 0 1033.07 157.43ZM1037.09 170.17A4.13 4.13 0 1 0 1044.99 170.17M1045.06 170.40L1049.01 157.43A4.13 4.13 0 1 0 1041.11 157.43ZM1045.13 170.17A4.13 4.13 0 1 0 1053.03 170.17M1053.10 170.40L1057.05 157.43A4.13 4.13 0 1 0 1049.15 157.43ZM1053.17 170.17A4.13 4.13 0 1 0 1061.07 170.17M1061.14 170.40L1065.09 157.43A4.13 4.13 0 1 0 1057.19 157.43ZM1061.21 170.17A4.13 4.13 0 1 0 1069.11 170.17M1069.18 170.40L1073.13 157.43A4.13 4.13 0 1 0 1065.23 157.43ZM1069.25 170.17A4.13 4.13 0 1 0 1077.15 170.17M1077.22 170.40L1081.17 157.43A4.13 4.13 0 1 0 1073.27 157.43ZM1077.29 170.17A4.13 4.13 0 1 0 1085.19 170.17M1085.26 170.40L1089.21 157.43A4.13 4.13 0 1 0 1081.31 157.43ZM1085.33 170.17A4.13 4.13 0 1 0 1093.23 170.17M1093.30 170.40L1097.25 157.43A4.13 4.13 0 1 0 1089.35 157.43ZM1093.37 170.17A4.13 4.13 0 1 0 1101.27 170.17M1101.34 170.40L1105.29 157.43A4.13 4.13 0 1 0 1097.39 157.43ZM1101.41 170.17A4.13 4.13 0 1 0 1109.31 170.17M1109.38 170.40L1113.33 157.43A4.13 4.13 0 1 0 1105.43 157.43ZM1109.45 170.17A4.13 4.13 0 1 0 1117.35 170.17M1117.42 170.40L1121.37 157.43A4.13 4.13 0 1 0 1113.47 157.43ZM1117.49 170.17A4.13 4.13 0 1 0 1125.38 170.17M1125.46 170.40L1129.40 157.43A4.13 4.13 0 1 0 1121.51 157.43ZM1125.53 170.17A4.13 4.13 0 1 0 1133.42 170.17M1133.49 170.40L1137.44 157.43A4.13 4.13 0 1 0 1129.55 157.43ZM1133.56 170.17A4.13 4.13 0 1 0 1141.46 170.17M1141.53 170.40L1145.48 157.43A4.13 4.13 0 1 0 1137.58 157.43ZM1141.60 170.17A4.13 4.13 0 1 0 1149.50 170.17M1149.57 170.40L1153.52 157.43A4.13 4.13 0 1 0 1145.62 157.43ZM1149.64 170.17A4.13 4.13 0 1 0 1157.54 170.17M1157.61 170.40L1161.56 157.43A4.13 4.13 0 1 0 1153.66 157.43ZM1157.68 170.17A4.13 4.13 0 1 0 1165.58 170.17M1165.65 170.40L1169.60 157.43A4.13 4.13 0 1 0 1161.70 157.43ZM1165.72 170.17A4.13 4.13 0 1 0 1173.62 170.17M1173.69 170.40L1177.64 157.43A4.13 4.13 0 1 0 1169.74 157.43ZM1173.76 170.17A4.13 4.13 0 1 0 1181.66 170.17M1181.73 170.40L1185.68 157.43A4.13 4.13 0 1 0 1177.78 157.43ZM1181.80 170.17A4.13 4.13 0 1 0 1189.70 170.17M1189.77 170.40L1193.72 157.43A4.13 4.13 0 1 0 1185.82 157.43ZM1189.84 170.17A4.13 4.13 0 1 0 1197.74 170.17M1197.81 170.40L1201.76 157.43A4.13 4.13 0 1 0 1193.86 157.43ZM1197.88 170.17A4.13 4.13 0 1 0 1205.78 170.17M1205.85 170.40L1209.80 157.43A4.13 4.13 0 1 0 1201.90 157.43ZM1205.92 170.17A4.13 4.13 0 1 0 1213.82 170.17M1213.89 170.40L1217.84 157.43A4.13 4.13 0 1 0 1209.94 157.43ZM1213.96 170.17A4.13 4.13 0 1 0 1221.86 170.17M1221.93 170.40L1225.88 157.43A4.13 4.13 0 1 0 1217.98 157.43ZM1222.00 170.17A4.13 4.13 0 1 0 1229.90 170.17M1229.97 170.40L1233.92 157.43A4.13 4.13 0 1 0 1226.02 157.43ZM1230.04 170.17A4.13 4.13 0 1 0 1237.94 170.17M1238.01 170.40L1241.95 157.43A4.13 4.13 0 1 0 1234.06 157.43ZM1238.08 170.17A4.13 4.13 0 1 0 1245.97 170.17M1246.04 170.40L1249.99 157.43A4.13 4.13 0 1 0 1242.10 157.43ZM1246.12 170.17A4.13 4.13 0 1 0 1254.01 170.17M1254.08 170.40L1258.03 157.43A4.13 4.13 0 1 0 1250.13 157.43ZM1254.15 170.17A4.13 4.13 0 1 0 1262.05 170.17M1262.12 170.40L1266.07 157.43A4.13 4.13 0 1 0 1258.17 157.43ZM1262.19 170.17A4.13 4.13 0 1 0 1270.09 170.17M1270.16 170.40L1274.11 157.43A4.13 4.13 0 1 0 1266.21 157.43ZM1270.23 170.17A4.13 4.13 0 1 0 1278.13 170.17M1278.20 170.40L1282.15 157.43A4.13 4.13 0 1 0 1274.25 157.43ZM1278.27 170.17A4.13 4.13 0 1 0 1286.17 170.17M1286.24 170.40L1290.19 157.43A4.13 4.13 0 1 0 1282.29 157.43ZM1286.31 170.17A4.13 4.13 0 1 0 1294.21 170.17M1294.28 170.40L1298.23 157.43A4.13 4.13 0 1 0 1290.33 157.43ZM1294.35 170.17A4.13 4.13 0 1 0 1302.25 170.17M1302.32 170.40L1306.27 157.43A4.13 4.13 0 1 0 1298.37 157.43ZM1302.39 170.17A4.13 4.13 0 1 0 1310.29 170.17M1310.36 170.40L1314.31 157.43A4.13 4.13 0 1 0 1306.41 157.43ZM1310.43 170.17A4.13 4.13 0 1 0 1318.33 170.17M1318.40 170.40L1322.35 157.43A4.13 4.13 0 1 0 1314.45 157.43ZM1318.47 170.17A4.13 4.13 0 1 0 1326.37 170.17M1326.44 170.40L1330.39 157.43A4.13 4.13 0 1 0 1322.49 157.43ZM1326.51 170.17A4.13 4.13 0 1 0 1334.41 170.17M1334.48 170.40L1338.43 157.43A4.13 4.13 0 1 0 1330.53 157.43ZM1334.55 170.17A4.13 4.13 0 1 0 1342.45 170.17M1342.52 170.40L1346.47 157.43A4.13 4.13 0 1 0 1338.57 157.43ZM1342.59 170.17A4.13 4.13 0 1 0 1350.49 170.17M1350.56 170.40L1354.51 157.43A4.13 4.13 0 1 0 1346.61 157.43ZM1350.63 170.17A4.13 4.13 0 1 0 1358.53 170.17M1358.60 170.40L1362.54 157.43A4.13 4.13 0 1 0 1354.65 157.43ZM1358.67 170.17A4.13 4.13 0 1 0 1366.56 170.17M1366.63 170.40L1370.58 157.43A4.13 4.13 0 1 0 1362.69 157.43ZM1366.71 170.17A4.13 4.13 0 1 0 1374.60 170.17M1374.67 170.40L1378.62 157.43A4.13 4.13 0 1 0 1370.72 157.43ZM1374.74 170.17A4.13 4.13 0 1 0 1382.64 170.17M1382.71 170.40L1386.66 157.43A4.13 4.13 0 1 0 1378.76 157.43ZM1382.78 170.17A4.13 4.13 0 1 0 1390.68 170.17M1390.75 170.40L1394.70 157.43A4.13 4.13 0 1 0 1386.80 157.43ZM1390.82 170.17A4.13 4.13 0 1 0 1398.72 170.17M1398.79 170.40L1402.74 157.43A4.13 4.13 0 1 0 1394.84 157.43ZM1398.86 170.17A4.13 4.13 0 1 0 1406.76 170.17M1406.83 170.40L1410.78 157.43A4.13 4.13 0 1 0 1402.88 157.43ZM1406.90 170.17A4.13 4.13 0 1 0 1414.80 170.17M1414.87 170.40L1418.82 157.43A4.13 4.13 0 1 0 1410.92 157.43ZM1414.94 170.17A4.13 4.13 0 1 0 1422.84 170.17M1422.91 170.40L1426.86 157.43A4.13 4.13 0 1 0 1418.96 157.43ZM1422.98 170.17A4.13 4.13 0 1 0 1430.88 170.17M1430.95 170.40L1434.90 157.43A4.13 4.13 0 1 0 1427.00 157.43ZM1431.02 170.17A4.13 4.13 0 1 0 1438.92 170.17M1438.99 170.40L1442.94 157.43A4.13 4.13 0 1 0 1435.04 157.43ZM1439.06 170.17A4.13 4.13 0 1 0 1446.96 170.17M1447.03 170.40L1450.98 157.43A4.13 4.13 0 1 0 1443.08 157.43ZM1447.10 170.17A4.13 4.13 0 1 0 1455.00 170.17M1455.07 170.40L1459.02 157.43A4.13 4.13 0 1 0 1451.12 157.43ZM1455.14 170.17A4.13 4.13 0 1 0 1463.04 170.17M1463.11 170.40L1467.06 157.43A4.13 4.13 0 1 0 1459.16 157.43ZM1463.18 170.17A4.13 4.13 0 1 0 1471.08 170.17M1471.15 170.40L1475.10 157.43A4.13 4.13 0 1 0 1467.20 157.43ZM1471.22 170.17A4.13 4.13 0 1 0 1479.12 170.17M1479.19 170.40L1483.13 157.43A4.13 4.13 0 1 0 1475.24 157.43ZM1479.26 170.17A4.13 4.13 0 1 0 1487.15 170.17M1487.22 170.40L1491.17 157.43A4.13 4.13 0 1 0 1483.28 157.43ZM1487.30 170.17A4.13 4.13 0 1 0 1495.19 170.17M1495.26 170.40L1499.21 157.43A4.13 4.13 0 1 0 1491.31 157.43ZM1495.33 170.17A4.13 4.13 0 1 0 1503.23 170.17M1503.30 170.40L1507.25 157.43A4.13 4.13 0 1 0 1499.35 157.43ZM1503.37 170.17A4.13 4.13 0 1 0 1511.27 170.17M1511.34 170.40L1515.29 157.43A4.13 4.13 0 1 0 1507.39 157.43ZM1511.41 170.17A4.13 4.13 0 1 0 1519.31 170.17M1519.38 170.40L1523.33 157.43A4.13 4.13 0 1 0 1515.43 157.43ZM1519.45 170.17A4.13 4.13 0 1 0 1527.35 170.17M1527.42 170.40L1531.37 157.43A4.13 4.13 0 1 0 1523.47 157.43ZM1527.49 170.17A4.13 4.13 0 1 0 1535.39 170.17M1535.46 170.40L1539.41 157.43A4.13 4.13 0 1 0 1531.51 157.43ZM1535.53 170.17A4.13 4.13 0 1 0 1543.43 170.17M1543.50 170.40L1547.45 157.43A4.13 4.13 0 1 0 1539.55 157.43ZM1543.57 170.17A4.13 4.13 0 1 0 1551.47 170.17M1551.54 170.40L1555.49 157.43A4.13 4.13 0 1 0 1547.59 157.43ZM1551.61 170.17A4.13 4.13 0 1 0 1559.51 170.17" fill="none" stroke="#6e6726" stroke-width="1.25" stroke-opacity="1" stroke-linejoin="round" clip-path="url(#cl7)"/><path d="M783.28 280.80L803.82 203.63A21.26 21.26 0 1 0 762.74 203.63ZM785.10 273.97A21.26 21.26 0 1 0 826.18 273.97M828.00 280.80L848.54 203.63A21.26 21.26 0 1 0 807.46 203.63ZM829.82 273.97A21.26 21.26 0 1 0 870.90 273.97M872.72 280.80L893.26 203.63A21.26 21.26 0 1 0 852.18 203.63ZM874.54 273.97A21.26 21.26 0 1 0 915.62 273.97M917.44 280.80L937.98 203.63A21.26 21.26 0 1 0 896.90 203.63ZM919.25 273.97A21.26 21.26 0 1 0 960.34 273.97M962.16 280.80L982.70 203.63A21.26 21.26 0 1 0 941.61 203.63ZM963.97 273.97A21.26 21.26 0 1 0 1005.06 273.97M1006.88 280.80L1027.42 203.63A21.26 21.26 0 1 0 986.33 203.63ZM1008.69 273.97A21.26 21.26 0 1 0 1049.78 273.97M1051.59 280.80L1072.14 203.63A21.26 21.26 0 1 0 1031.05 203.63ZM1053.41 273.97A21.26 21.26 0 1 0 1094.50 273.97M1096.31 280.80L1116.85 203.63A21.26 21.26 0 1 0 1075.77 203.63ZM1098.13 273.97A21.26 21.26 0 1 0 1139.21 273.97M1141.03 280.80L1161.57 203.63A21.26 21.26 0 1 0 1120.49 203.63ZM1142.85 273.97A21.26 21.26 0 1 0 1183.93 273.97M1185.75 280.80L1206.29 203.63A21.26 21.26 0 1 0 1165.21 203.63ZM1187.57 273.97A21.26 21.26 0 1 0 1228.65 273.97M1230.47 280.80L1251.01 203.63A21.26 21.26 0 1 0 1209.93 203.63ZM1232.29 273.97A21.26 21.26 0 1 0 1273.37 273.97M1275.19 280.80L1295.73 203.63A21.26 21.26 0 1 0 1254.65 203.63ZM1277.00 273.97A21.26 21.26 0 1 0 1318.09 273.97M1319.91 280.80L1340.45 203.63A21.26 21.26 0 1 0 1299.36 203.63ZM1321.72 273.97A21.26 21.26 0 1 0 1362.81 273.97M1364.62 280.80L1385.17 203.63A21.26 21.26 0 1 0 1344.08 203.63ZM1366.44 273.97A21.26 21.26 0 1 0 1407.53 273.97M1409.34 280.80L1429.89 203.63A21.26 21.26 0 1 0 1388.80 203.63ZM1411.16 273.97A21.26 21.26 0 1 0 1452.25 273.97M1454.06 280.80L1474.60 203.63A21.26 21.26 0 1 0 1433.52 203.63ZM1455.88 273.97A21.26 21.26 0 1 0 1496.96 273.97M1498.78 280.80L1519.32 203.63A21.26 21.26 0 1 0 1478.24 203.63ZM1500.60 273.97A21.26 21.26 0 1 0 1541.68 273.97M1543.50 280.80L1564.04 203.63A21.26 21.26 0 1 0 1522.96 203.63ZM1545.32 273.97A21.26 21.26 0 1 0 1586.40 273.97M1588.22 280.80L1608.76 203.63A21.26 21.26 0 1 0 1567.68 203.63ZM1590.04 273.97A21.26 21.26 0 1 0 1631.12 273.97" fill="none" stroke="#6e6726" stroke-width="1.05" stroke-opacity="0.95" stroke-linejoin="round" clip-path="url(#cl5)"/><path d="M814.75 336.30L821.00 310.55A6.43 6.43 0 1 0 808.50 310.55ZM815.13 334.75A6.43 6.43 0 1 0 827.62 334.75M828.00 336.30L834.25 310.55A6.43 6.43 0 1 0 821.75 310.55ZM828.38 334.75A6.43 6.43 0 1 0 840.87 334.75M841.25 336.30L847.50 310.55A6.43 6.43 0 1 0 835.00 310.55ZM841.63 334.75A6.43 6.43 0 1 0 854.12 334.75M854.50 336.30L860.75 310.55A6.43 6.43 0 1 0 848.25 310.55ZM854.88 334.75A6.43 6.43 0 1 0 867.37 334.75M867.75 336.30L874.00 310.55A6.43 6.43 0 1 0 861.50 310.55ZM868.13 334.75A6.43 6.43 0 1 0 880.62 334.75M881.00 336.30L887.25 310.55A6.43 6.43 0 1 0 874.75 310.55ZM881.38 334.75A6.43 6.43 0 1 0 893.87 334.75M894.25 336.30L900.50 310.55A6.43 6.43 0 1 0 888.00 310.55ZM894.63 334.75A6.43 6.43 0 1 0 907.12 334.75M907.50 336.30L913.75 310.55A6.43 6.43 0 1 0 901.25 310.55ZM907.88 334.75A6.43 6.43 0 1 0 920.37 334.75M920.75 336.30L927.00 310.55A6.43 6.43 0 1 0 914.50 310.55ZM921.13 334.75A6.43 6.43 0 1 0 933.62 334.75M934.00 336.30L940.25 310.55A6.43 6.43 0 1 0 927.75 310.55ZM934.38 334.75A6.43 6.43 0 1 0 946.87 334.75M947.25 336.30L953.50 310.55A6.43 6.43 0 1 0 941.00 310.55ZM947.63 334.75A6.43 6.43 0 1 0 960.12 334.75M960.50 336.30L966.75 310.55A6.43 6.43 0 1 0 954.25 310.55ZM960.88 334.75A6.43 6.43 0 1 0 973.37 334.75M973.75 336.30L980.00 310.55A6.43 6.43 0 1 0 967.50 310.55ZM974.13 334.75A6.43 6.43 0 1 0 986.62 334.75M987.00 336.30L993.25 310.55A6.43 6.43 0 1 0 980.75 310.55ZM987.38 334.75A6.43 6.43 0 1 0 999.87 334.75M1000.25 336.30L1006.50 310.55A6.43 6.43 0 1 0 994.00 310.55ZM1000.63 334.75A6.43 6.43 0 1 0 1013.12 334.75M1013.50 336.30L1019.75 310.55A6.43 6.43 0 1 0 1007.25 310.55ZM1013.88 334.75A6.43 6.43 0 1 0 1026.37 334.75M1026.75 336.30L1033.00 310.55A6.43 6.43 0 1 0 1020.50 310.55ZM1027.13 334.75A6.43 6.43 0 1 0 1039.62 334.75M1040.00 336.30L1046.25 310.55A6.43 6.43 0 1 0 1033.75 310.55ZM1040.38 334.75A6.43 6.43 0 1 0 1052.87 334.75M1053.25 336.30L1059.50 310.55A6.43 6.43 0 1 0 1047.00 310.55ZM1053.63 334.75A6.43 6.43 0 1 0 1066.12 334.75M1066.50 336.30L1072.75 310.55A6.43 6.43 0 1 0 1060.25 310.55ZM1066.88 334.75A6.43 6.43 0 1 0 1079.37 334.75M1079.75 336.30L1086.00 310.55A6.43 6.43 0 1 0 1073.50 310.55ZM1080.13 334.75A6.43 6.43 0 1 0 1092.62 334.75M1093.00 336.30L1099.25 310.55A6.43 6.43 0 1 0 1086.75 310.55ZM1093.38 334.75A6.43 6.43 0 1 0 1105.87 334.75M1106.25 336.30L1112.50 310.55A6.43 6.43 0 1 0 1100.00 310.55ZM1106.63 334.75A6.43 6.43 0 1 0 1119.12 334.75M1119.50 336.30L1125.75 310.55A6.43 6.43 0 1 0 1113.25 310.55ZM1119.88 334.75A6.43 6.43 0 1 0 1132.37 334.75M1132.75 336.30L1139.00 310.55A6.43 6.43 0 1 0 1126.50 310.55ZM1133.13 334.75A6.43 6.43 0 1 0 1145.62 334.75M1146.00 336.30L1152.25 310.55A6.43 6.43 0 1 0 1139.75 310.55ZM1146.38 334.75A6.43 6.43 0 1 0 1158.87 334.75M1159.25 336.30L1165.50 310.55A6.43 6.43 0 1 0 1153.00 310.55ZM1159.63 334.75A6.43 6.43 0 1 0 1172.12 334.75M1172.50 336.30L1178.75 310.55A6.43 6.43 0 1 0 1166.25 310.55ZM1172.88 334.75A6.43 6.43 0 1 0 1185.37 334.75M1185.75 336.30L1192.00 310.55A6.43 6.43 0 1 0 1179.50 310.55ZM1186.13 334.75A6.43 6.43 0 1 0 1198.62 334.75M1199.00 336.30L1205.25 310.55A6.43 6.43 0 1 0 1192.75 310.55ZM1199.38 334.75A6.43 6.43 0 1 0 1211.87 334.75M1212.25 336.30L1218.50 310.55A6.43 6.43 0 1 0 1206.00 310.55ZM1212.63 334.75A6.43 6.43 0 1 0 1225.12 334.75M1225.50 336.30L1231.75 310.55A6.43 6.43 0 1 0 1219.25 310.55ZM1225.88 334.75A6.43 6.43 0 1 0 1238.37 334.75M1238.75 336.30L1245.00 310.55A6.43 6.43 0 1 0 1232.50 310.55ZM1239.13 334.75A6.43 6.43 0 1 0 1251.62 334.75M1252.00 336.30L1258.25 310.55A6.43 6.43 0 1 0 1245.75 310.55ZM1252.38 334.75A6.43 6.43 0 1 0 1264.87 334.75M1265.25 336.30L1271.50 310.55A6.43 6.43 0 1 0 1259.00 310.55ZM1265.63 334.75A6.43 6.43 0 1 0 1278.12 334.75M1278.50 336.30L1284.75 310.55A6.43 6.43 0 1 0 1272.25 310.55ZM1278.88 334.75A6.43 6.43 0 1 0 1291.37 334.75M1291.75 336.30L1298.00 310.55A6.43 6.43 0 1 0 1285.50 310.55ZM1292.13 334.75A6.43 6.43 0 1 0 1304.62 334.75M1305.00 336.30L1311.25 310.55A6.43 6.43 0 1 0 1298.75 310.55ZM1305.38 334.75A6.43 6.43 0 1 0 1317.87 334.75M1318.25 336.30L1324.50 310.55A6.43 6.43 0 1 0 1312.00 310.55ZM1318.63 334.75A6.43 6.43 0 1 0 1331.12 334.75M1331.50 336.30L1337.75 310.55A6.43 6.43 0 1 0 1325.25 310.55ZM1331.88 334.75A6.43 6.43 0 1 0 1344.37 334.75M1344.75 336.30L1351.00 310.55A6.43 6.43 0 1 0 1338.50 310.55ZM1345.13 334.75A6.43 6.43 0 1 0 1357.62 334.75M1358.00 336.30L1364.25 310.55A6.43 6.43 0 1 0 1351.75 310.55ZM1358.38 334.75A6.43 6.43 0 1 0 1370.87 334.75M1371.25 336.30L1377.50 310.55A6.43 6.43 0 1 0 1365.00 310.55ZM1371.63 334.75A6.43 6.43 0 1 0 1384.12 334.75M1384.50 336.30L1390.75 310.55A6.43 6.43 0 1 0 1378.25 310.55ZM1384.88 334.75A6.43 6.43 0 1 0 1397.37 334.75M1397.75 336.30L1404.00 310.55A6.43 6.43 0 1 0 1391.50 310.55ZM1398.13 334.75A6.43 6.43 0 1 0 1410.62 334.75M1411.00 336.30L1417.25 310.55A6.43 6.43 0 1 0 1404.75 310.55ZM1411.38 334.75A6.43 6.43 0 1 0 1423.87 334.75M1424.25 336.30L1430.50 310.55A6.43 6.43 0 1 0 1418.00 310.55ZM1424.63 334.75A6.43 6.43 0 1 0 1437.12 334.75M1437.50 336.30L1443.75 310.55A6.43 6.43 0 1 0 1431.25 310.55ZM1437.88 334.75A6.43 6.43 0 1 0 1450.37 334.75M1450.75 336.30L1457.00 310.55A6.43 6.43 0 1 0 1444.50 310.55ZM1451.13 334.75A6.43 6.43 0 1 0 1463.62 334.75M1464.00 336.30L1470.25 310.55A6.43 6.43 0 1 0 1457.75 310.55ZM1464.38 334.75A6.43 6.43 0 1 0 1476.87 334.75M1477.25 336.30L1483.50 310.55A6.43 6.43 0 1 0 1471.00 310.55ZM1477.63 334.75A6.43 6.43 0 1 0 1490.12 334.75M1490.50 336.30L1496.75 310.55A6.43 6.43 0 1 0 1484.25 310.55ZM1490.88 334.75A6.43 6.43 0 1 0 1503.37 334.75M1503.75 336.30L1510.00 310.55A6.43 6.43 0 1 0 1497.50 310.55ZM1504.13 334.75A6.43 6.43 0 1 0 1516.62 334.75M1517.00 336.30L1523.25 310.55A6.43 6.43 0 1 0 1510.75 310.55ZM1517.38 334.75A6.43 6.43 0 1 0 1529.87 334.75M1530.25 336.30L1536.50 310.55A6.43 6.43 0 1 0 1524.00 310.55ZM1530.63 334.75A6.43 6.43 0 1 0 1543.12 334.75M1543.50 336.30L1549.75 310.55A6.43 6.43 0 1 0 1537.25 310.55ZM1543.88 334.75A6.43 6.43 0 1 0 1556.37 334.75M1556.75 336.30L1563.00 310.55A6.43 6.43 0 1 0 1550.50 310.55ZM1557.13 334.75A6.43 6.43 0 1 0 1569.62 334.75" fill="none" stroke="#6e6726" stroke-width="1.2" stroke-opacity="1" stroke-linejoin="round" clip-path="url(#cl2)"/><path d="M828 175.6 H1543.5" stroke="#6e6726" stroke-width="1.2" opacity=".85"/><rect x="899.5" y="175.5" width="47.5" height="127.80000000000001" fill="#c8a27b"/><g clip-path="url(#cta)" fill="none" stroke="#7d604a" stroke-width="1" stroke-opacity=".8"><circle cx="901.7" cy="238.6" r="2.2"/><ellipse cx="901.7" cy="238.6" rx="6.7" ry="9.5"/><ellipse cx="901.7" cy="238.6" rx="12.9" ry="18.3"/><ellipse cx="901.7" cy="238.6" rx="19.6" ry="27.9"/><ellipse cx="901.7" cy="238.6" rx="26.9" ry="38.2"/><ellipse cx="901.7" cy="238.6" rx="34.6" ry="49.2"/><ellipse cx="901.7" cy="238.6" rx="42.9" ry="60.9"/><ellipse cx="901.7" cy="238.6" rx="51.7" ry="73.4"/><ellipse cx="901.7" cy="238.6" rx="61.0" ry="86.6"/><ellipse cx="901.7" cy="238.6" rx="70.8" ry="100.5"/><ellipse cx="901.7" cy="238.6" rx="81.1" ry="115.1"/><ellipse cx="901.7" cy="238.6" rx="91.9" ry="130.5"/></g><path d="M900.0 175.5 V303.3 M946.5 175.5 V303.3" stroke="#9b7c5e" stroke-width="1" fill="none"/><rect x="1424.5" y="175.5" width="47.200000000000045" height="127.80000000000001" fill="#c8a27b"/><g clip-path="url(#ctb)" fill="none" stroke="#7d604a" stroke-width="1" stroke-opacity=".8"><circle cx="1426.8" cy="238.6" r="2.2"/><ellipse cx="1426.8" cy="238.6" rx="6.7" ry="9.5"/><ellipse cx="1426.8" cy="238.6" rx="12.9" ry="18.3"/><ellipse cx="1426.8" cy="238.6" rx="19.6" ry="27.9"/><ellipse cx="1426.8" cy="238.6" rx="26.9" ry="38.2"/><ellipse cx="1426.8" cy="238.6" rx="34.6" ry="49.2"/><ellipse cx="1426.8" cy="238.6" rx="42.9" ry="60.9"/><ellipse cx="1426.8" cy="238.6" rx="51.7" ry="73.4"/><ellipse cx="1426.8" cy="238.6" rx="61.0" ry="86.6"/><ellipse cx="1426.8" cy="238.6" rx="70.8" ry="100.5"/><ellipse cx="1426.8" cy="238.6" rx="81.1" ry="115.1"/><ellipse cx="1426.8" cy="238.6" rx="91.9" ry="130.5"/></g><path d="M1425.0 175.5 V303.3 M1471.2 175.5 V303.3" stroke="#9b7c5e" stroke-width="1" fill="none"/><rect x="899.5" y="303.3" width="47.5" height="39.89999999999998" fill="#c8a27b"/><g clip-path="url(#ctc)" fill="none" stroke="#7d604a" stroke-width="1" stroke-opacity=".8"><circle cx="923" cy="340.3" r="2.2"/><ellipse cx="923" cy="340.3" rx="8.0" ry="8.0"/><ellipse cx="923" cy="340.3" rx="15.6" ry="15.6"/><ellipse cx="923" cy="340.3" rx="23.9" ry="23.9"/><ellipse cx="923" cy="340.3" rx="32.8" ry="32.8"/><ellipse cx="923" cy="340.3" rx="42.3" ry="42.3"/><ellipse cx="923" cy="340.3" rx="52.4" ry="52.4"/><ellipse cx="923" cy="340.3" rx="63.2" ry="63.2"/><ellipse cx="923" cy="340.3" rx="74.6" ry="74.6"/><ellipse cx="923" cy="340.3" rx="86.7" ry="86.7"/></g><path d="M900.0 303.3 V343.2 M946.5 303.3 V343.2" stroke="#9b7c5e" stroke-width="1" fill="none"/><rect x="1424.5" y="303.3" width="47.200000000000045" height="39.89999999999998" fill="#c8a27b"/><g clip-path="url(#ctd)" fill="none" stroke="#7d604a" stroke-width="1" stroke-opacity=".8"><circle cx="1448" cy="340.3" r="2.2"/><ellipse cx="1448" cy="340.3" rx="8.0" ry="8.0"/><ellipse cx="1448" cy="340.3" rx="15.6" ry="15.6"/><ellipse cx="1448" cy="340.3" rx="23.9" ry="23.9"/><ellipse cx="1448" cy="340.3" rx="32.8" ry="32.8"/><ellipse cx="1448" cy="340.3" rx="42.3" ry="42.3"/><ellipse cx="1448" cy="340.3" rx="52.4" ry="52.4"/><ellipse cx="1448" cy="340.3" rx="63.2" ry="63.2"/><ellipse cx="1448" cy="340.3" rx="74.6" ry="74.6"/><ellipse cx="1448" cy="340.3" rx="86.7" ry="86.7"/></g><path d="M1425.0 303.3 V343.2 M1471.2 303.3 V343.2" stroke="#9b7c5e" stroke-width="1" fill="none"/><rect x="907.3" y="127.5" width="39.700000000000045" height="24.0" fill="#c8a27b"/><g clip-path="url(#cte)" fill="none" stroke="#7d604a" stroke-width="1" stroke-opacity=".8"><circle cx="927.3" cy="148.8" r="2.2"/><ellipse cx="927.3" cy="148.8" rx="6.0" ry="6.0"/><ellipse cx="927.3" cy="148.8" rx="11.4" ry="11.4"/><ellipse cx="927.3" cy="148.8" rx="17.3" ry="17.3"/><ellipse cx="927.3" cy="148.8" rx="23.7" ry="23.7"/><ellipse cx="927.3" cy="148.8" rx="30.5" ry="30.5"/><ellipse cx="927.3" cy="148.8" rx="37.7" ry="37.7"/><ellipse cx="927.3" cy="148.8" rx="45.4" ry="45.4"/><ellipse cx="927.3" cy="148.8" rx="53.6" ry="53.6"/><ellipse cx="927.3" cy="148.8" rx="62.2" ry="62.2"/><ellipse cx="927.3" cy="148.8" rx="71.2" ry="71.2"/><ellipse cx="927.3" cy="148.8" rx="80.8" ry="80.8"/><ellipse cx="927.3" cy="148.8" rx="90.7" ry="90.7"/></g><path d="M907.8 127.5 V151.5 M946.5 127.5 V151.5" stroke="#9b7c5e" stroke-width="1" fill="none"/><rect x="1424.5" y="127.5" width="39.5" height="24.0" fill="#c8a27b"/><g clip-path="url(#ctf)" fill="none" stroke="#7d604a" stroke-width="1" stroke-opacity=".8"><circle cx="1444.3" cy="148.8" r="2.2"/><ellipse cx="1444.3" cy="148.8" rx="6.0" ry="6.0"/><ellipse cx="1444.3" cy="148.8" rx="11.4" ry="11.4"/><ellipse cx="1444.3" cy="148.8" rx="17.3" ry="17.3"/><ellipse cx="1444.3" cy="148.8" rx="23.7" ry="23.7"/><ellipse cx="1444.3" cy="148.8" rx="30.5" ry="30.5"/><ellipse cx="1444.3" cy="148.8" rx="37.7" ry="37.7"/><ellipse cx="1444.3" cy="148.8" rx="45.4" ry="45.4"/><ellipse cx="1444.3" cy="148.8" rx="53.6" ry="53.6"/><ellipse cx="1444.3" cy="148.8" rx="62.2" ry="62.2"/><ellipse cx="1444.3" cy="148.8" rx="71.2" ry="71.2"/><ellipse cx="1444.3" cy="148.8" rx="80.8" ry="80.8"/><ellipse cx="1444.3" cy="148.8" rx="90.7" ry="90.7"/></g><path d="M1425.0 127.5 V151.5 M1463.5 127.5 V151.5" stroke="#9b7c5e" stroke-width="1" fill="none"/><path d="M907.3 151.2 H947 M1424.5 151.2 H1464" stroke="#9b7c5e" stroke-width="1" opacity=".7"/><rect x="828" y="343" width="715.5" height="10" fill="#dedede"/><path d="M828 343.2 H1543.5" stroke="#8c8672" stroke-width="1.1"/><path d="M828 352.6 H1543.5" stroke="#7b7b7b" stroke-width="1.2"/><g fill="#aeaeb8" opacity=".85"><rect x="1072.6" y="344.6" width="2.2" height="2.2"/><rect x="901.1" y="347.9" width="1.5" height="1.5"/><rect x="922.2" y="347.8" width="2.0" height="2.0"/><rect x="1190.7" y="347.9" width="2.1" height="2.1"/><rect x="1265.0" y="344.6" width="2.0" height="2.0"/><rect x="1413.7" y="344.7" width="1.9" height="1.9"/><rect x="1503.6" y="349.6" width="1.6" height="1.6"/><rect x="1159.1" y="344.5" width="2.1" height="2.1"/><rect x="1123.0" y="350.2" width="2.0" height="2.0"/><rect x="848.7" y="348.3" width="2.3" height="2.3"/><rect x="1329.6" y="349.8" width="2.0" height="2.0"/><rect x="1128.3" y="348.5" width="2.3" height="2.3"/><rect x="1122.8" y="345.4" width="2.0" height="2.0"/><rect x="1205.1" y="350.5" width="1.7" height="1.7"/><rect x="1078.4" y="346.6" width="1.6" height="1.6"/><rect x="1245.9" y="347.1" width="1.5" height="1.5"/><rect x="1154.6" y="346.2" width="1.8" height="1.8"/><rect x="1477.5" y="347.9" width="2.3" height="2.3"/><rect x="1515.6" y="348.0" width="1.6" height="1.6"/><rect x="1102.1" y="346.1" width="1.9" height="1.9"/><rect x="1131.2" y="350.6" width="2.2" height="2.2"/><rect x="1116.7" y="346.3" width="2.3" height="2.3"/><rect x="999.8" y="349.4" width="1.4" height="1.4"/><rect x="1268.1" y="347.3" width="2.1" height="2.1"/><rect x="1022.6" y="345.8" width="1.6" height="1.6"/><rect x="1345.7" y="350.5" width="1.9" height="1.9"/><rect x="879.8" y="345.2" width="1.4" height="1.4"/><rect x="1272.5" y="345.9" width="1.9" height="1.9"/><rect x="1454.4" y="346.0" width="2.0" height="2.0"/><rect x="1290.1" y="349.3" width="2.1" height="2.1"/><rect x="909.4" y="348.0" width="1.6" height="1.6"/><rect x="897.3" y="348.5" width="1.9" height="1.9"/><rect x="1238.4" y="346.0" width="1.6" height="1.6"/><rect x="1521.7" y="346.7" width="1.7" height="1.7"/><rect x="1310.4" y="347.2" width="1.8" height="1.8"/><rect x="1384.7" y="344.9" width="1.7" height="1.7"/><rect x="901.2" y="350.2" width="1.6" height="1.6"/><rect x="1005.5" y="345.3" width="1.7" height="1.7"/><rect x="1158.0" y="349.6" width="1.4" height="1.4"/><rect x="861.3" y="346.5" width="2.1" height="2.1"/><rect x="880.0" y="348.2" width="1.8" height="1.8"/><rect x="833.7" y="346.1" width="1.9" height="1.9"/><rect x="1349.6" y="348.4" width="2.0" height="2.0"/><rect x="1094.5" y="346.5" width="1.5" height="1.5"/><rect x="1138.2" y="348.0" width="1.4" height="1.4"/><rect x="1423.3" y="349.5" width="1.9" height="1.9"/><rect x="1410.2" y="347.8" width="1.8" height="1.8"/><rect x="1427.9" y="350.3" width="2.3" height="2.3"/><rect x="1074.6" y="347.2" width="1.8" height="1.8"/><rect x="1154.3" y="348.9" width="1.7" height="1.7"/><rect x="1472.8" y="346.6" width="2.0" height="2.0"/><rect x="1080.9" y="347.3" width="1.5" height="1.5"/><rect x="1186.6" y="345.8" width="1.8" height="1.8"/><rect x="914.5" y="344.7" width="2.1" height="2.1"/><rect x="1515.0" y="348.6" width="1.6" height="1.6"/><rect x="1062.3" y="345.9" width="2.3" height="2.3"/><rect x="906.4" y="344.6" width="1.4" height="1.4"/><rect x="1489.5" y="344.7" width="1.7" height="1.7"/><rect x="1507.0" y="347.0" width="1.8" height="1.8"/><rect x="854.5" y="348.1" width="1.5" height="1.5"/><rect x="1467.8" y="348.4" width="2.2" height="2.2"/><rect x="1226.9" y="347.9" width="1.9" height="1.9"/><rect x="1070.8" y="350.0" width="1.6" height="1.6"/><rect x="1355.7" y="345.7" width="1.7" height="1.7"/><rect x="1209.8" y="347.4" width="2.0" height="2.0"/><rect x="917.5" y="346.1" width="1.7" height="1.7"/><rect x="1328.8" y="344.6" width="1.6" height="1.6"/><rect x="1173.7" y="346.1" width="2.1" height="2.1"/><rect x="981.2" y="345.0" width="2.2" height="2.2"/><rect x="1483.3" y="346.9" width="1.7" height="1.7"/><rect x="1199.2" y="346.8" width="2.0" height="2.0"/><rect x="1330.3" y="350.1" width="2.3" height="2.3"/><rect x="1266.0" y="349.6" width="2.2" height="2.2"/><rect x="1415.1" y="347.1" width="2.3" height="2.3"/><rect x="1478.6" y="350.0" width="1.4" height="1.4"/><rect x="1170.7" y="344.7" width="2.3" height="2.3"/><rect x="1468.2" y="345.4" width="1.8" height="1.8"/><rect x="1409.3" y="345.3" width="1.9" height="1.9"/><rect x="1057.2" y="347.0" width="2.2" height="2.2"/><rect x="1321.7" y="347.5" width="2.3" height="2.3"/><rect x="957.4" y="348.2" width="2.0" height="2.0"/><rect x="1209.1" y="349.3" width="1.7" height="1.7"/><rect x="1226.8" y="346.8" width="2.2" height="2.2"/><rect x="1307.1" y="349.1" width="2.1" height="2.1"/><rect x="1251.2" y="346.8" width="2.0" height="2.0"/><rect x="1240.9" y="348.9" width="1.5" height="1.5"/><rect x="1221.2" y="349.4" width="1.6" height="1.6"/><rect x="1072.3" y="346.5" width="2.1" height="2.1"/><rect x="1367.0" y="347.2" width="2.2" height="2.2"/><rect x="1084.5" y="345.1" width="2.3" height="2.3"/><rect x="969.8" y="346.8" width="1.6" height="1.6"/><rect x="982.1" y="345.1" width="1.9" height="1.9"/><rect x="1065.0" y="349.4" width="1.6" height="1.6"/><rect x="1078.1" y="346.5" width="2.3" height="2.3"/><rect x="1445.6" y="347.2" width="2.0" height="2.0"/></g><path d="M827 302.8 H1545" stroke="#2b6eb3" stroke-width="2.4"/><circle cx="1205.6" cy="119.2" r="9.9" fill="#fff" stroke="#333" stroke-width="1.1"/><text x="1205.6" y="124.2" font-size="14" fill="#222" text-anchor="middle">9</text><circle cx="1205.6" cy="139.6" r="9.9" fill="#fff" stroke="#333" stroke-width="1.1"/><text x="1205.6" y="144.6" font-size="14" fill="#222" text-anchor="middle">8</text><circle cx="1205.6" cy="163.5" r="9.9" fill="#fff" stroke="#333" stroke-width="1.1"/><text x="1205.6" y="168.5" font-size="14" fill="#222" text-anchor="middle">7</text><circle cx="1185.7" cy="175.4" r="9.9" fill="#fff" stroke="#333" stroke-width="1.1"/><text x="1185.7" y="180.4" font-size="14" fill="#222" text-anchor="middle">6</text><circle cx="1185.7" cy="239" r="9.9" fill="#fff" stroke="#333" stroke-width="1.1"/><text x="1185.7" y="244" font-size="14" fill="#222" text-anchor="middle">5</text><circle cx="1165.5" cy="302.8" r="9.9" fill="#fff" stroke="#333" stroke-width="1.1"/><text x="1165.5" y="307.8" font-size="14" fill="#222" text-anchor="middle">3</text><circle cx="1185.7" cy="302.8" r="9.9" fill="#fff" stroke="#333" stroke-width="1.1"/><text x="1185.7" y="307.8" font-size="14" fill="#222" text-anchor="middle">4</text><circle cx="1165.5" cy="323" r="9.9" fill="#fff" stroke="#333" stroke-width="1.1"/><text x="1165.5" y="328" font-size="14" fill="#222" text-anchor="middle">2</text><circle cx="1165.5" cy="347.8" r="9.9" fill="#fff" stroke="#333" stroke-width="1.1"/><text x="1165.5" y="352.8" font-size="14" fill="#222" text-anchor="middle">1</text><text x="1185.5" y="104" font-size="14" fill="#8a8a8a" text-anchor="middle" >Outside</text><text x="1185.5" y="369" font-size="14" fill="#8a8a8a" text-anchor="middle" >Inside</text><text x="1543" y="368.5" font-size="14" fill="#c6c6c6" text-anchor="end" >ubakus.de</text><path d="M899.5 382.4 H1424.3 M899.5 377.5 V387.5 M947 377.5 V387.5 M1424.3 377.5 V387.5" stroke="#6f6f6f" stroke-width="1" fill="none"/><path d="M907.4 402.3 H1424.3 M907.4 397.5 V407.5 M947 397.5 V407.5 M1424.3 397.5 V407.5" stroke="#6f6f6f" stroke-width="1" fill="none"/><text x="923" y="398" font-size="14" fill="#8a8a8a" text-anchor="middle" >60</text><text x="1185.5" y="398" font-size="14" fill="#8a8a8a" text-anchor="middle" >600</text><text x="927.3" y="418.2" font-size="14" fill="#8a8a8a" text-anchor="middle" >50</text><text x="1185.5" y="418.2" font-size="14" fill="#8a8a8a" text-anchor="middle" >600</text><path d="M1537.5 116.3 L1563.4 116.3 L1588.3 98" stroke="#555" stroke-width="1" fill="none"/><circle cx="1537.5" cy="116.3" r="1.7" fill="#333"/><path d="M1457.7 133.3 L1563.4 133.3 L1588.3 122.2" stroke="#555" stroke-width="1" fill="none"/><circle cx="1457.7" cy="133.3" r="1.7" fill="#333"/><path d="M1537 145.8 L1588.3 145.8" stroke="#555" stroke-width="1" fill="none"/><circle cx="1537" cy="145.8" r="1.7" fill="#333"/><path d="M1537 169.5 L1588.3 169.5" stroke="#555" stroke-width="1" fill="none"/><circle cx="1537" cy="169.5" r="1.7" fill="#d8d8c0"/><path d="M1578.5 175.4 L1583.5 175.4 L1583.5 194 L1588.5 194" stroke="#555" stroke-width="1" fill="none"/><path d="M1465.5 222.2 L1588.3 222.2" stroke="#555" stroke-width="1" fill="none"/><circle cx="1465.5" cy="222.2" r="1.7" fill="#333"/><path d="M1537 246 L1588.3 246" stroke="#555" stroke-width="1" fill="none"/><circle cx="1537" cy="246" r="1.7" fill="#d8d8c0"/><path d="M1588.5 270 L1583.5 270 L1583.5 302.2 L1578.5 302.2" stroke="#555" stroke-width="1" fill="none"/><path d="M1537 302.7 L1563.4 302.7 L1588.3 294.6" stroke="#555" stroke-width="1" fill="none"/><circle cx="1537" cy="302.7" r="1.7" fill="#333"/><path d="M1465.5 317.6 L1588.3 318" stroke="#555" stroke-width="1" fill="none"/><circle cx="1465.5" cy="317.6" r="1.7" fill="#333"/><path d="M1537 336.3 L1563.4 336.3 L1588.3 342" stroke="#555" stroke-width="1" fill="none"/><circle cx="1537" cy="336.3" r="1.7" fill="#333"/><path d="M1537 347.5 L1563.4 347.5 L1588.3 366.5" stroke="#555" stroke-width="1" fill="none"/><circle cx="1537" cy="347.5" r="1.7" fill="#333"/><text x="1593.5" y="103" font-size="14" fill="#444" text-anchor="start" >Clapboard siding (22mm)</text><text x="1593.5" y="127" font-size="14" fill="#444" text-anchor="start" >Rafter (spruce) (30x50mm²)</text><text x="1593.5" y="151" font-size="14" fill="#444" text-anchor="start" >Rear ventilated level (outside air) (30mm)</text><text x="1593.5" y="175" font-size="14" fill="#444" text-anchor="start" >Tuuletõke isover rkl-31</text><text x="1593.5" y="199" font-size="14" fill="#b4b4b4" text-anchor="start" >Spruce (25mm)</text><text x="1593.5" y="227" font-size="14" fill="#444" text-anchor="start" >structural timber (160x60mm²)</text><text x="1593.5" y="251" font-size="14" fill="#444" text-anchor="start" >Rockwool, stone wool (160mm)</text><text x="1593.5" y="275" font-size="14" fill="#b4b4b4" text-anchor="start" >Spruce (25mm)</text><text x="1593.5" y="299" font-size="14" fill="#2e6bc4" text-anchor="start" >Vapor retarder sd=10m (0,5mm)</text><text x="1593.5" y="323" font-size="14" fill="#444" text-anchor="start" >Rafter (spruce) (50x60mm²)</text><text x="1593.5" y="347" font-size="14" fill="#444" text-anchor="start" >Rockwool, stone wool (50mm)</text><text x="1593.5" y="371" font-size="14" fill="#444" text-anchor="start" >Gypsum board (12,5mm)</text></svg>
<div id="bot"><div class="a" style="left:370px;top:11.3px;font-size:21px;line-height:24px;color:#f4f4f4">U-value:</div><div class="a" style="left:454px;top:5.8px;font-size:25.2px;line-height:30px;color:#f4f4f4">0,174</div><div class="a" style="left:523px;top:18.8px;font-size:12.5px;line-height:14px;color:#f4f4f4;letter-spacing:-.4px;text-shadow:0 0 1px rgba(255,255,255,.6)">W/(m²K)</div><svg style="left:582px;top:14px" width="19" height="19" viewBox="0 0 19 19"><g fill="none" stroke="#a6a6a6" stroke-linecap="round"><path d="M6.4 6.4 L15.2 15.2" stroke-width="3.8"/></g><path d="M0.9 3.4 A4.6 4.6 0 0 0 9 7.2 A4.6 4.6 0 0 0 5.4 0.3 L6.6 3.6 L3.9 5.6 Z" fill="#a6a6a6"/><circle cx="15.2" cy="15.2" r=".9" fill="#444"/></svg><div class="bar" style="left:370px;top:42px;height:12px"><i style="width:39.6px;background:#8cc152;box-shadow:0 1px 0 rgba(40,50,20,.9), inset 0 1px 0 rgba(255,255,255,.22)"></i></div><div class="strip" style="left:371px;width:231px;top:55px;background:linear-gradient(90deg,#7f9a60 0,#7f9a60 24.5%,#8a302c 25%,#8a302c 100%)"></div><div class="l" style="left:370px;top:63.2px;">GEG 2020 Bestand U ≤ 0.24</div><div class="a" style="left:540.5px;top:61.700000000000045px;width:15px;height:15px;background:#cfcfcf;border:1px solid #e2e2e2"></div><div class="a" style="left:543.5px;top:65.60000000000002px;border-left:4.5px solid transparent;border-right:4.5px solid transparent;border-top:8px solid #333"></div><div class="l" style="left:370px;top:90.0px;">Kasvuhooneefekti soodustamine:</div><div class="bar" style="left:370px;top:107px;height:8px"><i style="width:57.5px;background:#8cc152;box-shadow:0 1px 0 rgba(40,50,20,.9), inset 0 1px 0 rgba(255,255,255,.22)"></i></div><div class="strip" style="left:371px;width:231px;top:116px;background:linear-gradient(90deg,#7f9a60 0,#7f9a60 40%,#c4aa32 68%,#b0602e 85%,#8a302c 100%)"></div><div class="g" style="left:370px;top:125.0px;">suurepärane</div><div class="g" style="right:1222px;top:125.0px;">ebapiisav</div><div class="l" style="left:622px;top:10.0px;">Kondensaat: 0 kg/m²</div><div class="bar" style="left:622px;top:27px;height:8px"><i style="width:2.8px;background:#9fbf6a;box-shadow:0 1px 0 rgba(40,50,20,.9), inset 0 1px 0 rgba(255,255,255,.22)"></i></div><div class="strip" style="left:623px;width:231px;top:36px;background:linear-gradient(90deg,#7f9a60 0,#7f9a60 50%,#c4aa32 74%,#b0602e 88%,#8a302c 98%)"></div><div class="l" style="left:622px;top:50.0px;">puidu niiskusesisaldus: + 0,0 %</div><div class="bar" style="left:622px;top:67px;height:8px"><i style="width:2.8px;background:#9fbf6a;box-shadow:0 1px 0 rgba(40,50,20,.9), inset 0 1px 0 rgba(255,255,255,.22)"></i></div><div class="strip" style="left:623px;width:231px;top:76px;background:linear-gradient(90deg,#7f9a60 0,#7f9a60 25%,#c4aa32 36%,#b0602e 44%,#8a302c 55%,#8a302c 100%)"></div><div class="l" style="left:622px;top:90.0px;">Kuivamisaeg: -</div><div class="bar" style="left:622px;top:107px;height:8px"><i style="width:2.8px;background:#9fbf6a;box-shadow:0 1px 0 rgba(40,50,20,.9), inset 0 1px 0 rgba(255,255,255,.22)"></i></div><div class="strip" style="left:623px;width:231px;top:116px;background:linear-gradient(90deg,#7f9a60 0,#7f9a60 32%,#c4aa32 52%,#c4aa32 64%,#b0602e 82%,#8a302c 95%)"></div><div class="g" style="left:622px;top:125.0px;">suurepärane</div><div class="g" style="right:970px;top:125.0px;">ebapiisav</div><div class="l" style="left:874px;top:10.0px;">sd-väärtus: 11 m</div><div class="l" style="right:718px;top:10.0px;">Paksus: 30,5 cm</div><div class="l" style="right:718px;top:27.8px;">Kaal: 35 kg/m²</div><div class="l" style="left:874px;top:48.0px;">Sisepind: 17,1°C (60%)</div><div class="bar" style="left:874px;top:65px;height:8px"><i style="width:92.0px;background:#8cc152;box-shadow:0 1px 0 rgba(40,50,20,.9), inset 0 1px 0 rgba(255,255,255,.22)"></i></div><div class="strip" style="left:875px;width:231px;top:74px;background:linear-gradient(90deg,#8a302c 0,#8a302c 13%,#c4aa32 24%,#c4aa32 30%,#7f9a60 42%,#7f9a60 100%)"></div><div class="l" style="left:874px;top:88.0px;">Kuivatusvaru: 2916 g/m²a</div><div class="bar" style="left:874px;top:105px;height:8px"><i style="width:230.0px;background:#8cc152;box-shadow:0 1px 0 rgba(40,50,20,.9), inset 0 1px 0 rgba(255,255,255,.22)"></i></div><div class="strip" style="left:875px;width:231px;top:114px;background:linear-gradient(90deg,#8a302c 0,#8a302c 44%,#c4aa32 50%,#7f9a60 56%,#7f9a60 100%)"></div><div class="g" style="left:874px;top:122.6px;">ebapiisav</div><div class="g" style="right:718px;top:122.6px;">suurepärane</div><div class="l" style="left:1126px;top:10.0px;width:232px;overflow:hidden">temp. amplituudi summutus (1/TAV): 6,5</div><div class="bar" style="left:1126px;top:27px;height:8px"><i style="width:73.6px;background:#b3c832;box-shadow:0 1px 0 rgba(40,50,20,.9), inset 0 1px 0 rgba(255,255,255,.22)"></i></div><div class="strip" style="left:1127px;width:231px;top:36px;background:linear-gradient(90deg,#8a302c 0,#8a302c 2%,#b0602e 6%,#c4aa32 12%,#7f9a60 26%,#7f9a60 100%)"></div><div class="l" style="left:1126px;top:50.0px;">faasinihe: 8,3 h</div><div class="bar" style="left:1126px;top:67px;height:8px"><i style="width:105.1px;background:#8cc152;box-shadow:0 1px 0 rgba(40,50,20,.9), inset 0 1px 0 rgba(255,255,255,.22)"></i></div><div class="strip" style="left:1127px;width:231px;top:76px;background:linear-gradient(90deg,#8a302c 0,#8a302c 4%,#b0602e 10%,#c4aa32 20%,#7f9a60 36%,#7f9a60 100%)"></div><div class="l" style="left:1126px;top:90.0px;width:232px;overflow:hidden">Soojuse salvestamise võimsus: 22 kJ/m²K</div><div class="bar" style="left:1126px;top:107px;height:8px"><i style="width:50.6px;background:#dcae1e;box-shadow:0 1px 0 rgba(40,50,20,.9), inset 0 1px 0 rgba(255,255,255,.22)"></i></div><div class="strip" style="left:1127px;width:231px;top:116px;background:linear-gradient(90deg,#8a302c 0,#8a302c 4%,#b0602e 14%,#c4aa32 30%,#7f9a60 46%,#7f9a60 100%)"></div><div class="g" style="left:1126px;top:125.0px;">ebapiisav</div><div class="g" style="right:466px;top:125.0px;">suurepärane</div></div><div class="t" style="left:701px;top:662.9px;color:#7b1c1c">Kommertskasutus ainult tasulise juurdepääsuga. <span style="color:#2440a8">Rohkem informatsiooni</span></div>
</body></html>
